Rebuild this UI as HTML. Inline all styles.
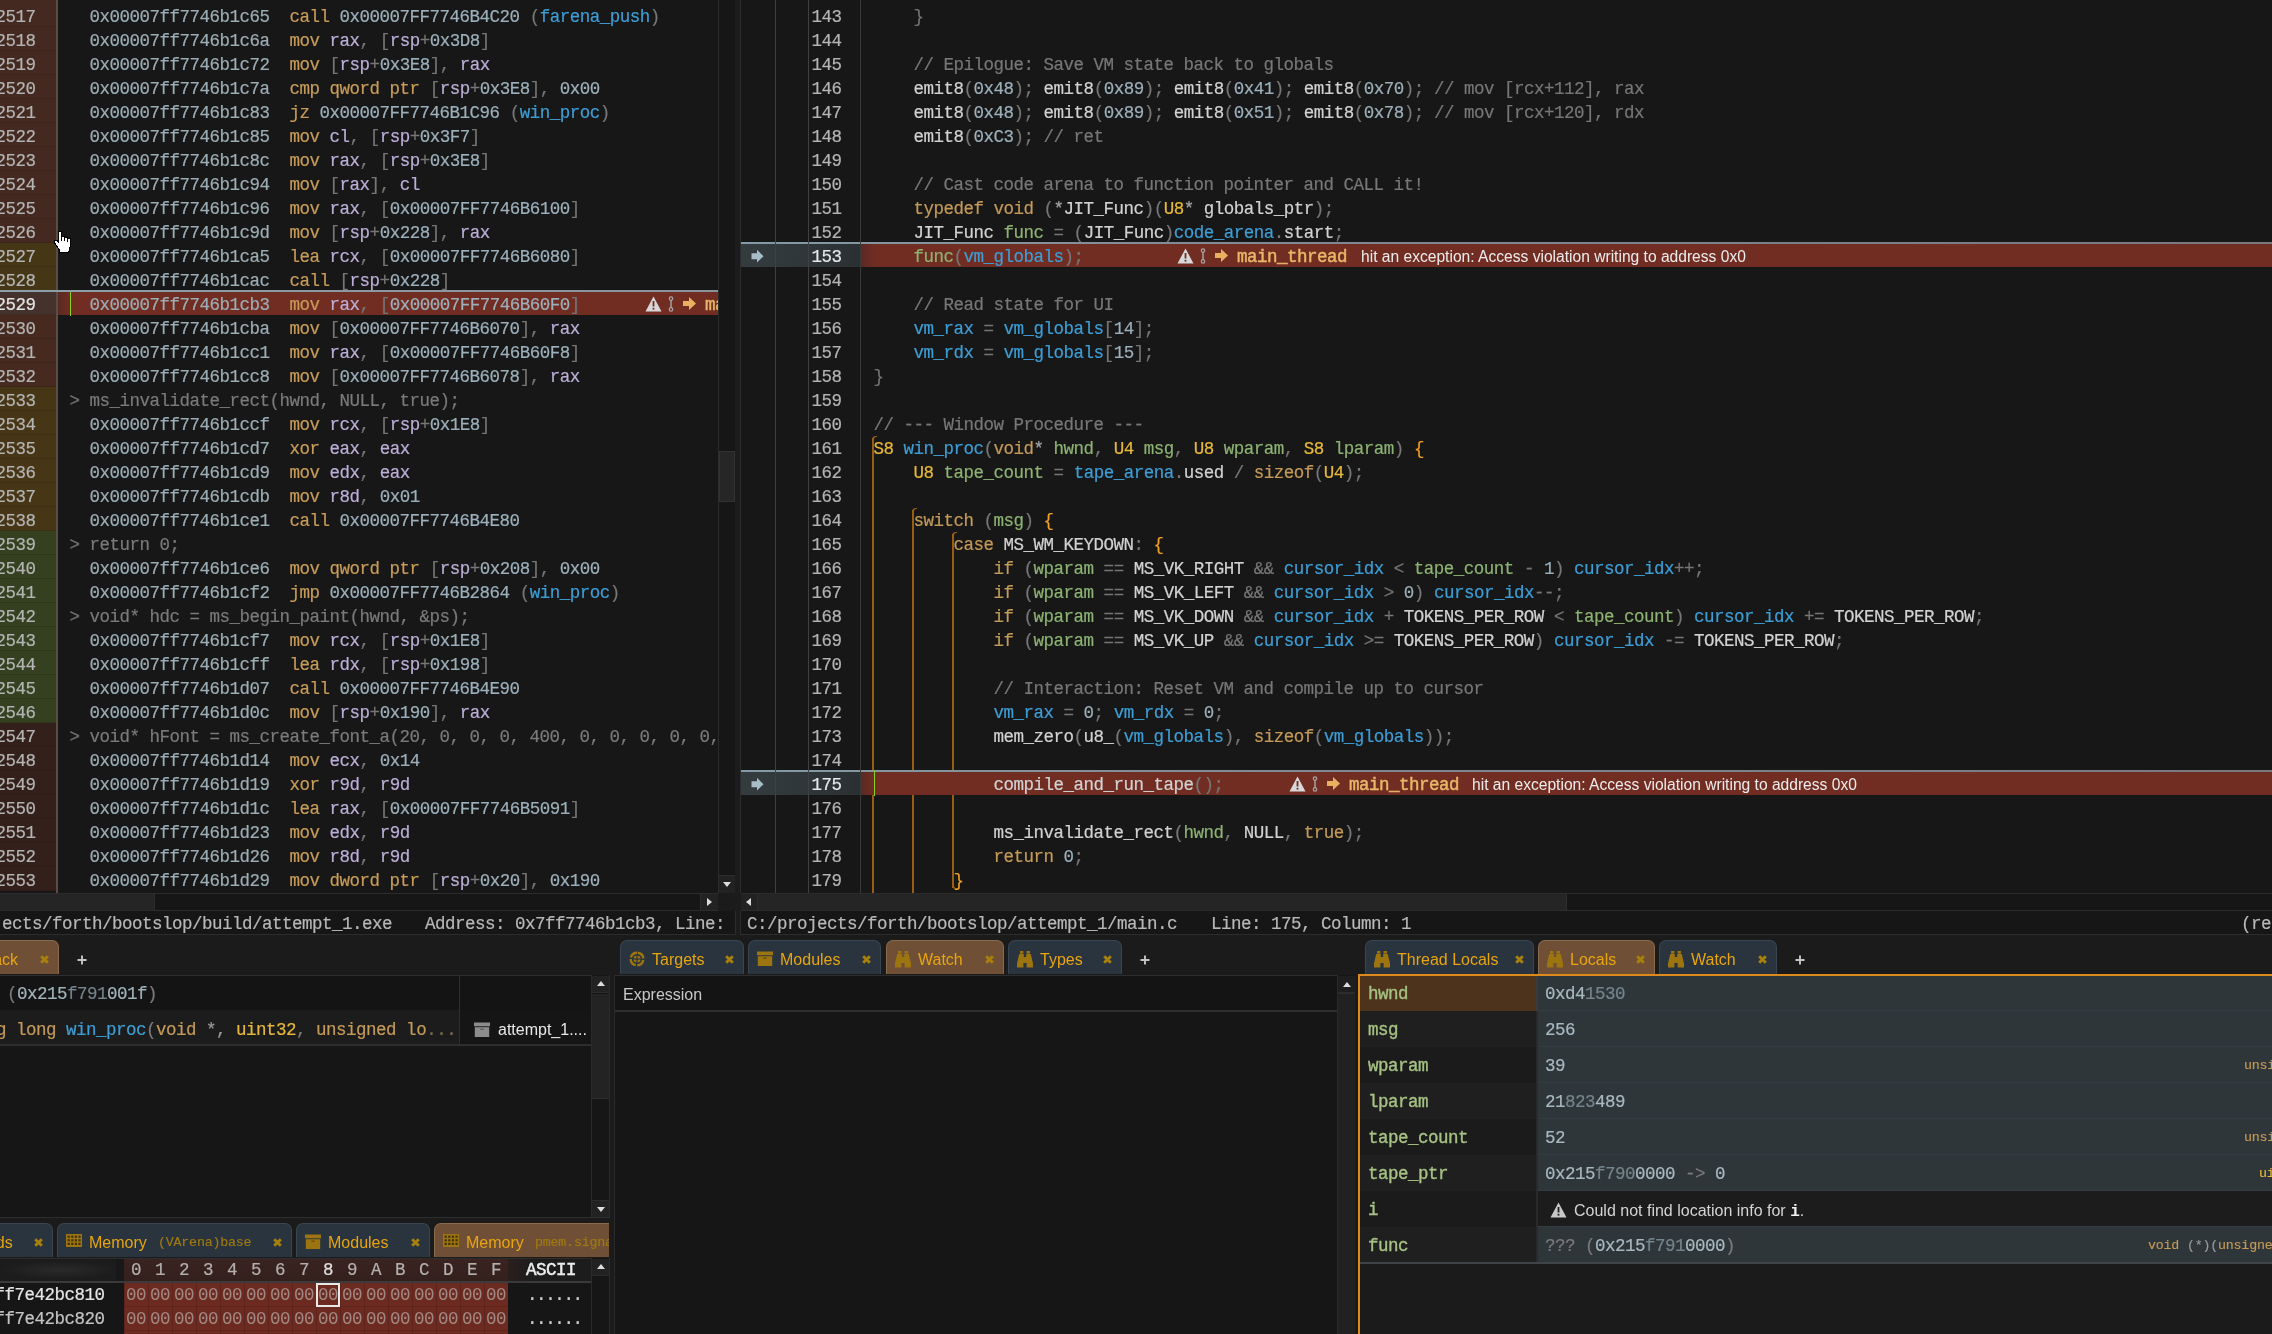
<!DOCTYPE html>
<html><head><meta charset="utf-8"><style>
html,body{margin:0;padding:0;}
#root{position:absolute;left:0;top:0;width:2272px;height:1334px;overflow:hidden;will-change:transform;}
.t{position:absolute;white-space:pre;height:24px;line-height:24px;}
.m{font-family:'Liberation Mono',monospace;font-size:17.5px;letter-spacing:-0.5px;-webkit-text-stroke:0.2px;}
.s{font-family:'Liberation Sans',sans-serif;font-size:16px;}
body{width:2272px;height:1334px;overflow:hidden;position:relative;background:#1b1b1b;}
</style></head><body><div id="root">
<div style="position:absolute;left:0px;top:0px;width:718px;height:893px;overflow:hidden;background:#171717">
<div style="position:absolute;left:0px;top:0px;width:56px;height:3px;background:#43291f;"></div>
<div style="position:absolute;left:56px;top:0px;width:2px;height:893px;background:#5a4c47;"></div>
<div style="position:absolute;left:0px;top:3px;width:56px;height:24px;background:#43291f;box-shadow:inset 0 -1px 0 rgba(0,0,0,0.12);"></div>
<div class="t m" style="left:-4.5px;top:4.5px;"><span style="color:#b4b4b4">2517</span></div>
<div class="t m" style="left:89.5px;top:4.5px;"><span style="color:#9cadb5">0x00007ff7746b1c65</span>  <span style="color:#c89c58">call</span> <span style="color:#9cb0bb">0x00007FF7746B4C20</span> <span style="color:#767676">(</span><span style="color:#3d9ed6">farena_push</span><span style="color:#767676">)</span></div>
<div style="position:absolute;left:0px;top:27px;width:56px;height:24px;background:#43291f;box-shadow:inset 0 -1px 0 rgba(0,0,0,0.12);"></div>
<div class="t m" style="left:-4.5px;top:28.5px;"><span style="color:#b4b4b4">2518</span></div>
<div class="t m" style="left:89.5px;top:28.5px;"><span style="color:#9cadb5">0x00007ff7746b1c6a</span>  <span style="color:#c89c58">mov</span> <span style="color:#bcaed8">rax</span><span style="color:#767676">,</span> <span style="color:#767676">[</span><span style="color:#bcaed8">rsp</span><span style="color:#767676">+</span><span style="color:#9cb0bb">0x3D8</span><span style="color:#767676">]</span></div>
<div style="position:absolute;left:0px;top:51px;width:56px;height:24px;background:#43291f;box-shadow:inset 0 -1px 0 rgba(0,0,0,0.12);"></div>
<div class="t m" style="left:-4.5px;top:52.5px;"><span style="color:#b4b4b4">2519</span></div>
<div class="t m" style="left:89.5px;top:52.5px;"><span style="color:#9cadb5">0x00007ff7746b1c72</span>  <span style="color:#c89c58">mov</span> <span style="color:#767676">[</span><span style="color:#bcaed8">rsp</span><span style="color:#767676">+</span><span style="color:#9cb0bb">0x3E8</span><span style="color:#767676">]</span><span style="color:#767676">,</span> <span style="color:#bcaed8">rax</span></div>
<div style="position:absolute;left:0px;top:75px;width:56px;height:24px;background:#43291f;box-shadow:inset 0 -1px 0 rgba(0,0,0,0.12);"></div>
<div class="t m" style="left:-4.5px;top:76.5px;"><span style="color:#b4b4b4">2520</span></div>
<div class="t m" style="left:89.5px;top:76.5px;"><span style="color:#9cadb5">0x00007ff7746b1c7a</span>  <span style="color:#c89c58">cmp</span> <span style="color:#c89c58">qword</span> <span style="color:#c89c58">ptr</span> <span style="color:#767676">[</span><span style="color:#bcaed8">rsp</span><span style="color:#767676">+</span><span style="color:#9cb0bb">0x3E8</span><span style="color:#767676">]</span><span style="color:#767676">,</span> <span style="color:#9cb0bb">0x00</span></div>
<div style="position:absolute;left:0px;top:99px;width:56px;height:24px;background:#43291f;box-shadow:inset 0 -1px 0 rgba(0,0,0,0.12);"></div>
<div class="t m" style="left:-4.5px;top:100.5px;"><span style="color:#b4b4b4">2521</span></div>
<div class="t m" style="left:89.5px;top:100.5px;"><span style="color:#9cadb5">0x00007ff7746b1c83</span>  <span style="color:#c89c58">jz</span> <span style="color:#9cb0bb">0x00007FF7746B1C96</span> <span style="color:#767676">(</span><span style="color:#3d9ed6">win_proc</span><span style="color:#767676">)</span></div>
<div style="position:absolute;left:0px;top:123px;width:56px;height:24px;background:#43291f;box-shadow:inset 0 -1px 0 rgba(0,0,0,0.12);"></div>
<div class="t m" style="left:-4.5px;top:124.5px;"><span style="color:#b4b4b4">2522</span></div>
<div class="t m" style="left:89.5px;top:124.5px;"><span style="color:#9cadb5">0x00007ff7746b1c85</span>  <span style="color:#c89c58">mov</span> <span style="color:#bcaed8">cl</span><span style="color:#767676">,</span> <span style="color:#767676">[</span><span style="color:#bcaed8">rsp</span><span style="color:#767676">+</span><span style="color:#9cb0bb">0x3F7</span><span style="color:#767676">]</span></div>
<div style="position:absolute;left:0px;top:147px;width:56px;height:24px;background:#43291f;box-shadow:inset 0 -1px 0 rgba(0,0,0,0.12);"></div>
<div class="t m" style="left:-4.5px;top:148.5px;"><span style="color:#b4b4b4">2523</span></div>
<div class="t m" style="left:89.5px;top:148.5px;"><span style="color:#9cadb5">0x00007ff7746b1c8c</span>  <span style="color:#c89c58">mov</span> <span style="color:#bcaed8">rax</span><span style="color:#767676">,</span> <span style="color:#767676">[</span><span style="color:#bcaed8">rsp</span><span style="color:#767676">+</span><span style="color:#9cb0bb">0x3E8</span><span style="color:#767676">]</span></div>
<div style="position:absolute;left:0px;top:171px;width:56px;height:24px;background:#43291f;box-shadow:inset 0 -1px 0 rgba(0,0,0,0.12);"></div>
<div class="t m" style="left:-4.5px;top:172.5px;"><span style="color:#b4b4b4">2524</span></div>
<div class="t m" style="left:89.5px;top:172.5px;"><span style="color:#9cadb5">0x00007ff7746b1c94</span>  <span style="color:#c89c58">mov</span> <span style="color:#767676">[</span><span style="color:#bcaed8">rax</span><span style="color:#767676">]</span><span style="color:#767676">,</span> <span style="color:#bcaed8">cl</span></div>
<div style="position:absolute;left:0px;top:195px;width:56px;height:24px;background:#43291f;box-shadow:inset 0 -1px 0 rgba(0,0,0,0.12);"></div>
<div class="t m" style="left:-4.5px;top:196.5px;"><span style="color:#b4b4b4">2525</span></div>
<div class="t m" style="left:89.5px;top:196.5px;"><span style="color:#9cadb5">0x00007ff7746b1c96</span>  <span style="color:#c89c58">mov</span> <span style="color:#bcaed8">rax</span><span style="color:#767676">,</span> <span style="color:#767676">[</span><span style="color:#9cb0bb">0x00007FF7746B6100</span><span style="color:#767676">]</span></div>
<div style="position:absolute;left:0px;top:219px;width:56px;height:24px;background:#43291f;box-shadow:inset 0 -1px 0 rgba(0,0,0,0.12);"></div>
<div class="t m" style="left:-4.5px;top:220.5px;"><span style="color:#b4b4b4">2526</span></div>
<div class="t m" style="left:89.5px;top:220.5px;"><span style="color:#9cadb5">0x00007ff7746b1c9d</span>  <span style="color:#c89c58">mov</span> <span style="color:#767676">[</span><span style="color:#bcaed8">rsp</span><span style="color:#767676">+</span><span style="color:#9cb0bb">0x228</span><span style="color:#767676">]</span><span style="color:#767676">,</span> <span style="color:#bcaed8">rax</span></div>
<div style="position:absolute;left:0px;top:243px;width:56px;height:24px;background:#453616;box-shadow:inset 0 -1px 0 rgba(0,0,0,0.12);"></div>
<div class="t m" style="left:-4.5px;top:244.5px;"><span style="color:#b4b4b4">2527</span></div>
<div class="t m" style="left:89.5px;top:244.5px;"><span style="color:#9cadb5">0x00007ff7746b1ca5</span>  <span style="color:#c89c58">lea</span> <span style="color:#bcaed8">rcx</span><span style="color:#767676">,</span> <span style="color:#767676">[</span><span style="color:#9cb0bb">0x00007FF7746B6080</span><span style="color:#767676">]</span></div>
<div style="position:absolute;left:0px;top:267px;width:56px;height:24px;background:#453616;box-shadow:inset 0 -1px 0 rgba(0,0,0,0.12);"></div>
<div class="t m" style="left:-4.5px;top:268.5px;"><span style="color:#b4b4b4">2528</span></div>
<div class="t m" style="left:89.5px;top:268.5px;"><span style="color:#9cadb5">0x00007ff7746b1cac</span>  <span style="color:#c89c58">call</span> <span style="color:#767676">[</span><span style="color:#bcaed8">rsp</span><span style="color:#767676">+</span><span style="color:#9cb0bb">0x228</span><span style="color:#767676">]</span></div>
<div style="position:absolute;left:0px;top:291px;width:56px;height:24px;background:#46322c;box-shadow:inset 0 -1px 0 rgba(0,0,0,0.12);"></div>
<div style="position:absolute;left:0px;top:290px;width:718px;height:2px;background:#8a9ca6;"></div>
<div style="position:absolute;left:58px;top:292px;width:660px;height:23px;background:#722d23;"></div>
<div style="position:absolute;left:58px;top:292px;width:14px;height:23px;background:linear-gradient(90deg,#5a2a22,#722d23);"></div>
<div style="position:absolute;left:70px;top:290px;width:1px;height:26px;background:#8ad020;"></div>
<div class="t m" style="left:-4.5px;top:292.5px;"><span style="color:#e6e6e6">2529</span></div>
<div class="t m" style="left:89.5px;top:292.5px;"><span style="color:#9cadb5">0x00007ff7746b1cb3</span>  <span style="color:#c89c58">mov</span> <span style="color:#bcaed8">rax</span><span style="color:#767676">,</span> <span style="color:#767676">[</span><span style="color:#9cb0bb">0x00007FF7746B60F0</span><span style="color:#767676">]</span></div>
<div style="position:absolute;left:0px;top:315px;width:56px;height:24px;background:#46291f;box-shadow:inset 0 -1px 0 rgba(0,0,0,0.12);"></div>
<div class="t m" style="left:-4.5px;top:316.5px;"><span style="color:#b4b4b4">2530</span></div>
<div class="t m" style="left:89.5px;top:316.5px;"><span style="color:#9cadb5">0x00007ff7746b1cba</span>  <span style="color:#c89c58">mov</span> <span style="color:#767676">[</span><span style="color:#9cb0bb">0x00007FF7746B6070</span><span style="color:#767676">]</span><span style="color:#767676">,</span> <span style="color:#bcaed8">rax</span></div>
<div style="position:absolute;left:0px;top:339px;width:56px;height:24px;background:#46291f;box-shadow:inset 0 -1px 0 rgba(0,0,0,0.12);"></div>
<div class="t m" style="left:-4.5px;top:340.5px;"><span style="color:#b4b4b4">2531</span></div>
<div class="t m" style="left:89.5px;top:340.5px;"><span style="color:#9cadb5">0x00007ff7746b1cc1</span>  <span style="color:#c89c58">mov</span> <span style="color:#bcaed8">rax</span><span style="color:#767676">,</span> <span style="color:#767676">[</span><span style="color:#9cb0bb">0x00007FF7746B60F8</span><span style="color:#767676">]</span></div>
<div style="position:absolute;left:0px;top:363px;width:56px;height:24px;background:#46291f;box-shadow:inset 0 -1px 0 rgba(0,0,0,0.12);"></div>
<div class="t m" style="left:-4.5px;top:364.5px;"><span style="color:#b4b4b4">2532</span></div>
<div class="t m" style="left:89.5px;top:364.5px;"><span style="color:#9cadb5">0x00007ff7746b1cc8</span>  <span style="color:#c89c58">mov</span> <span style="color:#767676">[</span><span style="color:#9cb0bb">0x00007FF7746B6078</span><span style="color:#767676">]</span><span style="color:#767676">,</span> <span style="color:#bcaed8">rax</span></div>
<div style="position:absolute;left:0px;top:387px;width:56px;height:24px;background:#463615;box-shadow:inset 0 -1px 0 rgba(0,0,0,0.12);"></div>
<div class="t m" style="left:-4.5px;top:388.5px;"><span style="color:#b4b4b4">2533</span></div>
<div class="t m" style="left:69.5px;top:388.5px;"><span style="color:#767676">&gt; </span><span style="color:#7a7a7a">ms_invalidate_rect(hwnd, NULL, true);</span></div>
<div style="position:absolute;left:0px;top:411px;width:56px;height:24px;background:#463615;box-shadow:inset 0 -1px 0 rgba(0,0,0,0.12);"></div>
<div class="t m" style="left:-4.5px;top:412.5px;"><span style="color:#b4b4b4">2534</span></div>
<div class="t m" style="left:89.5px;top:412.5px;"><span style="color:#9cadb5">0x00007ff7746b1ccf</span>  <span style="color:#c89c58">mov</span> <span style="color:#bcaed8">rcx</span><span style="color:#767676">,</span> <span style="color:#767676">[</span><span style="color:#bcaed8">rsp</span><span style="color:#767676">+</span><span style="color:#9cb0bb">0x1E8</span><span style="color:#767676">]</span></div>
<div style="position:absolute;left:0px;top:435px;width:56px;height:24px;background:#463615;box-shadow:inset 0 -1px 0 rgba(0,0,0,0.12);"></div>
<div class="t m" style="left:-4.5px;top:436.5px;"><span style="color:#b4b4b4">2535</span></div>
<div class="t m" style="left:89.5px;top:436.5px;"><span style="color:#9cadb5">0x00007ff7746b1cd7</span>  <span style="color:#c89c58">xor</span> <span style="color:#bcaed8">eax</span><span style="color:#767676">,</span> <span style="color:#bcaed8">eax</span></div>
<div style="position:absolute;left:0px;top:459px;width:56px;height:24px;background:#463615;box-shadow:inset 0 -1px 0 rgba(0,0,0,0.12);"></div>
<div class="t m" style="left:-4.5px;top:460.5px;"><span style="color:#b4b4b4">2536</span></div>
<div class="t m" style="left:89.5px;top:460.5px;"><span style="color:#9cadb5">0x00007ff7746b1cd9</span>  <span style="color:#c89c58">mov</span> <span style="color:#bcaed8">edx</span><span style="color:#767676">,</span> <span style="color:#bcaed8">eax</span></div>
<div style="position:absolute;left:0px;top:483px;width:56px;height:24px;background:#463615;box-shadow:inset 0 -1px 0 rgba(0,0,0,0.12);"></div>
<div class="t m" style="left:-4.5px;top:484.5px;"><span style="color:#b4b4b4">2537</span></div>
<div class="t m" style="left:89.5px;top:484.5px;"><span style="color:#9cadb5">0x00007ff7746b1cdb</span>  <span style="color:#c89c58">mov</span> <span style="color:#bcaed8">r8d</span><span style="color:#767676">,</span> <span style="color:#9cb0bb">0x01</span></div>
<div style="position:absolute;left:0px;top:507px;width:56px;height:24px;background:#463615;box-shadow:inset 0 -1px 0 rgba(0,0,0,0.12);"></div>
<div class="t m" style="left:-4.5px;top:508.5px;"><span style="color:#b4b4b4">2538</span></div>
<div class="t m" style="left:89.5px;top:508.5px;"><span style="color:#9cadb5">0x00007ff7746b1ce1</span>  <span style="color:#c89c58">call</span> <span style="color:#9cb0bb">0x00007FF7746B4E80</span></div>
<div style="position:absolute;left:0px;top:531px;width:56px;height:24px;background:#34401f;box-shadow:inset 0 -1px 0 rgba(0,0,0,0.12);"></div>
<div class="t m" style="left:-4.5px;top:532.5px;"><span style="color:#b4b4b4">2539</span></div>
<div class="t m" style="left:69.5px;top:532.5px;"><span style="color:#767676">&gt; </span><span style="color:#7a7a7a">return 0;</span></div>
<div style="position:absolute;left:0px;top:555px;width:56px;height:24px;background:#34401f;box-shadow:inset 0 -1px 0 rgba(0,0,0,0.12);"></div>
<div class="t m" style="left:-4.5px;top:556.5px;"><span style="color:#b4b4b4">2540</span></div>
<div class="t m" style="left:89.5px;top:556.5px;"><span style="color:#9cadb5">0x00007ff7746b1ce6</span>  <span style="color:#c89c58">mov</span> <span style="color:#c89c58">qword</span> <span style="color:#c89c58">ptr</span> <span style="color:#767676">[</span><span style="color:#bcaed8">rsp</span><span style="color:#767676">+</span><span style="color:#9cb0bb">0x208</span><span style="color:#767676">]</span><span style="color:#767676">,</span> <span style="color:#9cb0bb">0x00</span></div>
<div style="position:absolute;left:0px;top:579px;width:56px;height:24px;background:#34401f;box-shadow:inset 0 -1px 0 rgba(0,0,0,0.12);"></div>
<div class="t m" style="left:-4.5px;top:580.5px;"><span style="color:#b4b4b4">2541</span></div>
<div class="t m" style="left:89.5px;top:580.5px;"><span style="color:#9cadb5">0x00007ff7746b1cf2</span>  <span style="color:#c89c58">jmp</span> <span style="color:#9cb0bb">0x00007FF7746B2864</span> <span style="color:#767676">(</span><span style="color:#3d9ed6">win_proc</span><span style="color:#767676">)</span></div>
<div style="position:absolute;left:0px;top:603px;width:56px;height:24px;background:#34401f;box-shadow:inset 0 -1px 0 rgba(0,0,0,0.12);"></div>
<div class="t m" style="left:-4.5px;top:604.5px;"><span style="color:#b4b4b4">2542</span></div>
<div class="t m" style="left:69.5px;top:604.5px;"><span style="color:#767676">&gt; </span><span style="color:#7a7a7a">void* hdc = ms_begin_paint(hwnd, &amp;ps);</span></div>
<div style="position:absolute;left:0px;top:627px;width:56px;height:24px;background:#34401f;box-shadow:inset 0 -1px 0 rgba(0,0,0,0.12);"></div>
<div class="t m" style="left:-4.5px;top:628.5px;"><span style="color:#b4b4b4">2543</span></div>
<div class="t m" style="left:89.5px;top:628.5px;"><span style="color:#9cadb5">0x00007ff7746b1cf7</span>  <span style="color:#c89c58">mov</span> <span style="color:#bcaed8">rcx</span><span style="color:#767676">,</span> <span style="color:#767676">[</span><span style="color:#bcaed8">rsp</span><span style="color:#767676">+</span><span style="color:#9cb0bb">0x1E8</span><span style="color:#767676">]</span></div>
<div style="position:absolute;left:0px;top:651px;width:56px;height:24px;background:#34401f;box-shadow:inset 0 -1px 0 rgba(0,0,0,0.12);"></div>
<div class="t m" style="left:-4.5px;top:652.5px;"><span style="color:#b4b4b4">2544</span></div>
<div class="t m" style="left:89.5px;top:652.5px;"><span style="color:#9cadb5">0x00007ff7746b1cff</span>  <span style="color:#c89c58">lea</span> <span style="color:#bcaed8">rdx</span><span style="color:#767676">,</span> <span style="color:#767676">[</span><span style="color:#bcaed8">rsp</span><span style="color:#767676">+</span><span style="color:#9cb0bb">0x198</span><span style="color:#767676">]</span></div>
<div style="position:absolute;left:0px;top:675px;width:56px;height:24px;background:#34401f;box-shadow:inset 0 -1px 0 rgba(0,0,0,0.12);"></div>
<div class="t m" style="left:-4.5px;top:676.5px;"><span style="color:#b4b4b4">2545</span></div>
<div class="t m" style="left:89.5px;top:676.5px;"><span style="color:#9cadb5">0x00007ff7746b1d07</span>  <span style="color:#c89c58">call</span> <span style="color:#9cb0bb">0x00007FF7746B4E90</span></div>
<div style="position:absolute;left:0px;top:699px;width:56px;height:24px;background:#34401f;box-shadow:inset 0 -1px 0 rgba(0,0,0,0.12);"></div>
<div class="t m" style="left:-4.5px;top:700.5px;"><span style="color:#b4b4b4">2546</span></div>
<div class="t m" style="left:89.5px;top:700.5px;"><span style="color:#9cadb5">0x00007ff7746b1d0c</span>  <span style="color:#c89c58">mov</span> <span style="color:#767676">[</span><span style="color:#bcaed8">rsp</span><span style="color:#767676">+</span><span style="color:#9cb0bb">0x190</span><span style="color:#767676">]</span><span style="color:#767676">,</span> <span style="color:#bcaed8">rax</span></div>
<div style="position:absolute;left:0px;top:723px;width:56px;height:24px;background:#33201b;box-shadow:inset 0 -1px 0 rgba(0,0,0,0.12);"></div>
<div class="t m" style="left:-4.5px;top:724.5px;"><span style="color:#b4b4b4">2547</span></div>
<div class="t m" style="left:69.5px;top:724.5px;"><span style="color:#767676">&gt; </span><span style="color:#7a7a7a">void* hFont = ms_create_font_a(20, 0, 0, 0, 400, 0, 0, 0, 0, 0,</span></div>
<div style="position:absolute;left:0px;top:747px;width:56px;height:24px;background:#33201b;box-shadow:inset 0 -1px 0 rgba(0,0,0,0.12);"></div>
<div class="t m" style="left:-4.5px;top:748.5px;"><span style="color:#b4b4b4">2548</span></div>
<div class="t m" style="left:89.5px;top:748.5px;"><span style="color:#9cadb5">0x00007ff7746b1d14</span>  <span style="color:#c89c58">mov</span> <span style="color:#bcaed8">ecx</span><span style="color:#767676">,</span> <span style="color:#9cb0bb">0x14</span></div>
<div style="position:absolute;left:0px;top:771px;width:56px;height:24px;background:#33201b;box-shadow:inset 0 -1px 0 rgba(0,0,0,0.12);"></div>
<div class="t m" style="left:-4.5px;top:772.5px;"><span style="color:#b4b4b4">2549</span></div>
<div class="t m" style="left:89.5px;top:772.5px;"><span style="color:#9cadb5">0x00007ff7746b1d19</span>  <span style="color:#c89c58">xor</span> <span style="color:#bcaed8">r9d</span><span style="color:#767676">,</span> <span style="color:#bcaed8">r9d</span></div>
<div style="position:absolute;left:0px;top:795px;width:56px;height:24px;background:#33201b;box-shadow:inset 0 -1px 0 rgba(0,0,0,0.12);"></div>
<div class="t m" style="left:-4.5px;top:796.5px;"><span style="color:#b4b4b4">2550</span></div>
<div class="t m" style="left:89.5px;top:796.5px;"><span style="color:#9cadb5">0x00007ff7746b1d1c</span>  <span style="color:#c89c58">lea</span> <span style="color:#bcaed8">rax</span><span style="color:#767676">,</span> <span style="color:#767676">[</span><span style="color:#9cb0bb">0x00007FF7746B5091</span><span style="color:#767676">]</span></div>
<div style="position:absolute;left:0px;top:819px;width:56px;height:24px;background:#33201b;box-shadow:inset 0 -1px 0 rgba(0,0,0,0.12);"></div>
<div class="t m" style="left:-4.5px;top:820.5px;"><span style="color:#b4b4b4">2551</span></div>
<div class="t m" style="left:89.5px;top:820.5px;"><span style="color:#9cadb5">0x00007ff7746b1d23</span>  <span style="color:#c89c58">mov</span> <span style="color:#bcaed8">edx</span><span style="color:#767676">,</span> <span style="color:#bcaed8">r9d</span></div>
<div style="position:absolute;left:0px;top:843px;width:56px;height:24px;background:#33201b;box-shadow:inset 0 -1px 0 rgba(0,0,0,0.12);"></div>
<div class="t m" style="left:-4.5px;top:844.5px;"><span style="color:#b4b4b4">2552</span></div>
<div class="t m" style="left:89.5px;top:844.5px;"><span style="color:#9cadb5">0x00007ff7746b1d26</span>  <span style="color:#c89c58">mov</span> <span style="color:#bcaed8">r8d</span><span style="color:#767676">,</span> <span style="color:#bcaed8">r9d</span></div>
<div style="position:absolute;left:0px;top:867px;width:56px;height:24px;background:#33201b;box-shadow:inset 0 -1px 0 rgba(0,0,0,0.12);"></div>
<div class="t m" style="left:-4.5px;top:868.5px;"><span style="color:#b4b4b4">2553</span></div>
<div class="t m" style="left:89.5px;top:868.5px;"><span style="color:#9cadb5">0x00007ff7746b1d29</span>  <span style="color:#c89c58">mov</span> <span style="color:#c89c58">dword</span> <span style="color:#c89c58">ptr</span> <span style="color:#767676">[</span><span style="color:#bcaed8">rsp</span><span style="color:#767676">+</span><span style="color:#9cb0bb">0x20</span><span style="color:#767676">]</span><span style="color:#767676">,</span> <span style="color:#9cb0bb">0x190</span></div>
<svg style="position:absolute;left:645px;top:296px" width="17" height="16" viewBox="0 0 17 16"><path d="M8.5 0.5L16.5 15.5H0.5Z" fill="#d8d8d8"/><rect x="7.6" y="5" width="1.8" height="5.5" fill="#722d23"/><rect x="7.6" y="11.8" width="1.8" height="1.8" fill="#722d23"/></svg>
<svg style="position:absolute;left:668px;top:296px" width="6" height="16" viewBox="0 0 6 16"><circle cx="3" cy="2.6" r="1.7" fill="none" stroke="#a8a8a8" stroke-width="1.2"/><circle cx="3" cy="13.4" r="1.7" fill="none" stroke="#a8a8a8" stroke-width="1.2"/><path d="M3 4.3V11.7" stroke="#a8a8a8" stroke-width="1.4"/></svg>
<svg style="position:absolute;left:683px;top:297px" width="13" height="13" viewBox="0 0 13 13"><path d="M0 4h6V0l7 6.5-7 6.5V9H0z" fill="#e8b060"/></svg>
<div class="t m" style="left:705px;top:293px;-webkit-text-stroke:0.45px;"><span style="color:#e8b868">main_thread</span></div>
<div class="t s" style="left:9999px;top:293px;font-size:15.6px;"><span style="color:#ececec">hit an exception: Access violation writing to address 0x0</span></div>
<div style="position:absolute;left:0px;top:290px;width:718px;height:2px;background:linear-gradient(90deg,#8aa0aa,#8a929a);"></div>
</div>
<svg style="position:absolute;left:0;top:0" width="100" height="260" viewBox="0 0 100 260" shape-rendering="crispEdges"><path d="M58.5 232.5Q58.5 231.5 60 231.5Q61.5 231.5 61.5 232.5V236.5H64.5V237.5H67.5V238.5H69.5Q70.5 238.5 70.5 239.5V246.5L69.5 247.5V250.5L68.5 252.5H59.5V250.5L54.5 242.5V241.5Q54.5 240.5 56 240.5Q57.5 240.5 58.5 242.5Z" fill="#fff" stroke="#000" stroke-width="1.1"/><path d="M61.5 236.5V240.5M64.5 237.5V240.5M67.5 238.5V241.5" stroke="#000" stroke-width="1"/></svg>
<div style="position:absolute;left:741px;top:0px;width:1531px;height:893px;background:#171717;"></div>
<div style="position:absolute;left:872px;top:438px;width:2px;height:455px;background:#985f14;"></div>
<div style="position:absolute;left:872px;top:436px;width:5px;height:6px;border-left:2px solid #985f14;border-top:1.5px solid #985f14;border-top-left-radius:4px;box-sizing:border-box"></div>
<div style="position:absolute;left:912px;top:510px;width:2px;height:383px;background:#985f14;"></div>
<div style="position:absolute;left:912px;top:508px;width:5px;height:6px;border-left:2px solid #985f14;border-top:1.5px solid #985f14;border-top-left-radius:4px;box-sizing:border-box"></div>
<div style="position:absolute;left:952px;top:534px;width:2px;height:354px;background:#985f14;"></div>
<div style="position:absolute;left:952px;top:532px;width:5px;height:6px;border-left:2px solid #985f14;border-top:1.5px solid #985f14;border-top-left-radius:4px;box-sizing:border-box"></div>
<div style="position:absolute;left:952px;top:883px;width:5px;height:6px;border-left:2px solid #985f14;border-bottom:1.5px solid #985f14;border-bottom-left-radius:4px;box-sizing:border-box"></div>
<div class="t m" style="left:811.5px;top:4.5px;"><span style="color:#b4b4b4">143</span></div>
<div class="t m" style="left:873.5px;top:4.5px;">    <span style="color:#767676">}</span></div>
<div class="t m" style="left:811.5px;top:28.5px;"><span style="color:#b4b4b4">144</span></div>
<div class="t m" style="left:811.5px;top:52.5px;"><span style="color:#b4b4b4">145</span></div>
<div class="t m" style="left:873.5px;top:52.5px;">    <span style="color:#777777">// Epilogue: Save VM state back to globals</span></div>
<div class="t m" style="left:811.5px;top:76.5px;"><span style="color:#b4b4b4">146</span></div>
<div class="t m" style="left:873.5px;top:76.5px;">    <span style="color:#d2d2d2">emit8</span><span style="color:#767676">(</span><span style="color:#9cb0bb">0x48</span><span style="color:#767676">)</span><span style="color:#767676">;</span> <span style="color:#d2d2d2">emit8</span><span style="color:#767676">(</span><span style="color:#9cb0bb">0x89</span><span style="color:#767676">)</span><span style="color:#767676">;</span> <span style="color:#d2d2d2">emit8</span><span style="color:#767676">(</span><span style="color:#9cb0bb">0x41</span><span style="color:#767676">)</span><span style="color:#767676">;</span> <span style="color:#d2d2d2">emit8</span><span style="color:#767676">(</span><span style="color:#9cb0bb">0x70</span><span style="color:#767676">)</span><span style="color:#767676">;</span> <span style="color:#777777">// mov [rcx+112], rax</span></div>
<div class="t m" style="left:811.5px;top:100.5px;"><span style="color:#b4b4b4">147</span></div>
<div class="t m" style="left:873.5px;top:100.5px;">    <span style="color:#d2d2d2">emit8</span><span style="color:#767676">(</span><span style="color:#9cb0bb">0x48</span><span style="color:#767676">)</span><span style="color:#767676">;</span> <span style="color:#d2d2d2">emit8</span><span style="color:#767676">(</span><span style="color:#9cb0bb">0x89</span><span style="color:#767676">)</span><span style="color:#767676">;</span> <span style="color:#d2d2d2">emit8</span><span style="color:#767676">(</span><span style="color:#9cb0bb">0x51</span><span style="color:#767676">)</span><span style="color:#767676">;</span> <span style="color:#d2d2d2">emit8</span><span style="color:#767676">(</span><span style="color:#9cb0bb">0x78</span><span style="color:#767676">)</span><span style="color:#767676">;</span> <span style="color:#777777">// mov [rcx+120], rdx</span></div>
<div class="t m" style="left:811.5px;top:124.5px;"><span style="color:#b4b4b4">148</span></div>
<div class="t m" style="left:873.5px;top:124.5px;">    <span style="color:#d2d2d2">emit8</span><span style="color:#767676">(</span><span style="color:#9cb0bb">0xC3</span><span style="color:#767676">)</span><span style="color:#767676">;</span> <span style="color:#777777">// ret</span></div>
<div class="t m" style="left:811.5px;top:148.5px;"><span style="color:#b4b4b4">149</span></div>
<div class="t m" style="left:811.5px;top:172.5px;"><span style="color:#b4b4b4">150</span></div>
<div class="t m" style="left:873.5px;top:172.5px;">    <span style="color:#777777">// Cast code arena to function pointer and CALL it!</span></div>
<div class="t m" style="left:811.5px;top:196.5px;"><span style="color:#b4b4b4">151</span></div>
<div class="t m" style="left:873.5px;top:196.5px;">    <span style="color:#c49a58">typedef</span> <span style="color:#c49a58">void</span> <span style="color:#767676">(</span><span style="color:#a8a8a8">*</span><span style="color:#d2d2d2">JIT_Func</span><span style="color:#767676">)</span><span style="color:#767676">(</span><span style="color:#e8b838">U8</span><span style="color:#a8a8a8">*</span> <span style="color:#d2d2d2">globals_ptr</span><span style="color:#767676">)</span><span style="color:#767676">;</span></div>
<div class="t m" style="left:811.5px;top:220.5px;"><span style="color:#b4b4b4">152</span></div>
<div class="t m" style="left:873.5px;top:220.5px;">    <span style="color:#d2d2d2">JIT_Func</span> <span style="color:#8db272">func</span> <span style="color:#767676">=</span> <span style="color:#767676">(</span><span style="color:#d2d2d2">JIT_Func</span><span style="color:#767676">)</span><span style="color:#3d9ed6">code_arena</span><span style="color:#767676">.</span><span style="color:#d2d2d2">start</span><span style="color:#767676">;</span></div>
<div style="position:absolute;left:741px;top:242px;width:1531px;height:2px;background:linear-gradient(90deg,#849aa4,#80888f 40%,#78797f);"></div>
<div style="position:absolute;left:741px;top:244px;width:120px;height:23px;background:linear-gradient(90deg,#353c40,#2f3639 60%,#2a2f32);"></div>
<div style="position:absolute;left:861px;top:244px;width:1411px;height:23px;background:#722d23;"></div>
<div style="position:absolute;left:861px;top:244px;width:14px;height:23px;background:linear-gradient(90deg,#5a2922,#722d23);"></div>
<svg style="position:absolute;left:750px;top:249px" width="14" height="14" viewBox="0 0 14 14"><path d="M1.5 4.2h5.5V0.8l6.5 6.4-6.5 6.4V10.3H1.5z" fill="#a6bcc6"/></svg>
<div class="t m" style="left:811.5px;top:244.5px;"><span style="color:#e8e8e8">153</span></div>
<div class="t m" style="left:873.5px;top:244.5px;">    <span style="color:#8db272">func</span><span style="color:#767676">(</span><span style="color:#3d9ed6">vm_globals</span><span style="color:#767676">)</span><span style="color:#767676">;</span></div>
<div class="t m" style="left:811.5px;top:268.5px;"><span style="color:#b4b4b4">154</span></div>
<div class="t m" style="left:811.5px;top:292.5px;"><span style="color:#b4b4b4">155</span></div>
<div class="t m" style="left:873.5px;top:292.5px;">    <span style="color:#777777">// Read state for UI</span></div>
<div class="t m" style="left:811.5px;top:316.5px;"><span style="color:#b4b4b4">156</span></div>
<div class="t m" style="left:873.5px;top:316.5px;">    <span style="color:#3d9ed6">vm_rax</span> <span style="color:#767676">=</span> <span style="color:#3d9ed6">vm_globals</span><span style="color:#767676">[</span><span style="color:#9cb0bb">14</span><span style="color:#767676">]</span><span style="color:#767676">;</span></div>
<div class="t m" style="left:811.5px;top:340.5px;"><span style="color:#b4b4b4">157</span></div>
<div class="t m" style="left:873.5px;top:340.5px;">    <span style="color:#3d9ed6">vm_rdx</span> <span style="color:#767676">=</span> <span style="color:#3d9ed6">vm_globals</span><span style="color:#767676">[</span><span style="color:#9cb0bb">15</span><span style="color:#767676">]</span><span style="color:#767676">;</span></div>
<div class="t m" style="left:811.5px;top:364.5px;"><span style="color:#b4b4b4">158</span></div>
<div class="t m" style="left:873.5px;top:364.5px;"><span style="color:#767676">}</span></div>
<div class="t m" style="left:811.5px;top:388.5px;"><span style="color:#b4b4b4">159</span></div>
<div class="t m" style="left:811.5px;top:412.5px;"><span style="color:#b4b4b4">160</span></div>
<div class="t m" style="left:873.5px;top:412.5px;"><span style="color:#777777">// --- Window Procedure ---</span></div>
<div class="t m" style="left:811.5px;top:436.5px;"><span style="color:#b4b4b4">161</span></div>
<div class="t m" style="left:873.5px;top:436.5px;"><span style="color:#e8b838">S8</span> <span style="color:#3d9ed6">win_proc</span><span style="color:#767676">(</span><span style="color:#c49a58">void</span><span style="color:#a8a8a8">*</span> <span style="color:#8db272">hwnd</span><span style="color:#767676">,</span> <span style="color:#e8b838">U4</span> <span style="color:#8db272">msg</span><span style="color:#767676">,</span> <span style="color:#e8b838">U8</span> <span style="color:#8db272">wparam</span><span style="color:#767676">,</span> <span style="color:#e8b838">S8</span> <span style="color:#8db272">lparam</span><span style="color:#767676">)</span> <span style="color:#f0a020">{</span></div>
<div class="t m" style="left:811.5px;top:460.5px;"><span style="color:#b4b4b4">162</span></div>
<div class="t m" style="left:873.5px;top:460.5px;">    <span style="color:#e8b838">U8</span> <span style="color:#8db272">tape_count</span> <span style="color:#767676">=</span> <span style="color:#3d9ed6">tape_arena</span><span style="color:#767676">.</span><span style="color:#d2d2d2">used</span> <span style="color:#767676">/</span> <span style="color:#c49a58">sizeof</span><span style="color:#767676">(</span><span style="color:#e8b838">U4</span><span style="color:#767676">)</span><span style="color:#767676">;</span></div>
<div class="t m" style="left:811.5px;top:484.5px;"><span style="color:#b4b4b4">163</span></div>
<div class="t m" style="left:811.5px;top:508.5px;"><span style="color:#b4b4b4">164</span></div>
<div class="t m" style="left:873.5px;top:508.5px;">    <span style="color:#c49a58">switch</span> <span style="color:#767676">(</span><span style="color:#8db272">msg</span><span style="color:#767676">)</span> <span style="color:#f0a020">{</span></div>
<div class="t m" style="left:811.5px;top:532.5px;"><span style="color:#b4b4b4">165</span></div>
<div class="t m" style="left:873.5px;top:532.5px;">        <span style="color:#c49a58">case</span> <span style="color:#d2d2d2">MS_WM_KEYDOWN</span><span style="color:#767676">:</span> <span style="color:#f0a020">{</span></div>
<div class="t m" style="left:811.5px;top:556.5px;"><span style="color:#b4b4b4">166</span></div>
<div class="t m" style="left:873.5px;top:556.5px;">            <span style="color:#c49a58">if</span> <span style="color:#767676">(</span><span style="color:#8db272">wparam</span> <span style="color:#767676">=</span><span style="color:#767676">=</span> <span style="color:#d2d2d2">MS_VK_RIGHT</span> <span style="color:#767676">&amp;</span><span style="color:#767676">&amp;</span> <span style="color:#3d9ed6">cursor_idx</span> <span style="color:#767676">&lt;</span> <span style="color:#8db272">tape_count</span> <span style="color:#767676">-</span> <span style="color:#9cb0bb">1</span><span style="color:#767676">)</span> <span style="color:#3d9ed6">cursor_idx</span><span style="color:#767676">+</span><span style="color:#767676">+</span><span style="color:#767676">;</span></div>
<div class="t m" style="left:811.5px;top:580.5px;"><span style="color:#b4b4b4">167</span></div>
<div class="t m" style="left:873.5px;top:580.5px;">            <span style="color:#c49a58">if</span> <span style="color:#767676">(</span><span style="color:#8db272">wparam</span> <span style="color:#767676">=</span><span style="color:#767676">=</span> <span style="color:#d2d2d2">MS_VK_LEFT</span> <span style="color:#767676">&amp;</span><span style="color:#767676">&amp;</span> <span style="color:#3d9ed6">cursor_idx</span> <span style="color:#767676">&gt;</span> <span style="color:#9cb0bb">0</span><span style="color:#767676">)</span> <span style="color:#3d9ed6">cursor_idx</span><span style="color:#767676">-</span><span style="color:#767676">-</span><span style="color:#767676">;</span></div>
<div class="t m" style="left:811.5px;top:604.5px;"><span style="color:#b4b4b4">168</span></div>
<div class="t m" style="left:873.5px;top:604.5px;">            <span style="color:#c49a58">if</span> <span style="color:#767676">(</span><span style="color:#8db272">wparam</span> <span style="color:#767676">=</span><span style="color:#767676">=</span> <span style="color:#d2d2d2">MS_VK_DOWN</span> <span style="color:#767676">&amp;</span><span style="color:#767676">&amp;</span> <span style="color:#3d9ed6">cursor_idx</span> <span style="color:#767676">+</span> <span style="color:#d2d2d2">TOKENS_PER_ROW</span> <span style="color:#767676">&lt;</span> <span style="color:#8db272">tape_count</span><span style="color:#767676">)</span> <span style="color:#3d9ed6">cursor_idx</span> <span style="color:#767676">+</span><span style="color:#767676">=</span> <span style="color:#d2d2d2">TOKENS_PER_ROW</span><span style="color:#767676">;</span></div>
<div class="t m" style="left:811.5px;top:628.5px;"><span style="color:#b4b4b4">169</span></div>
<div class="t m" style="left:873.5px;top:628.5px;">            <span style="color:#c49a58">if</span> <span style="color:#767676">(</span><span style="color:#8db272">wparam</span> <span style="color:#767676">=</span><span style="color:#767676">=</span> <span style="color:#d2d2d2">MS_VK_UP</span> <span style="color:#767676">&amp;</span><span style="color:#767676">&amp;</span> <span style="color:#3d9ed6">cursor_idx</span> <span style="color:#767676">&gt;</span><span style="color:#767676">=</span> <span style="color:#d2d2d2">TOKENS_PER_ROW</span><span style="color:#767676">)</span> <span style="color:#3d9ed6">cursor_idx</span> <span style="color:#767676">-</span><span style="color:#767676">=</span> <span style="color:#d2d2d2">TOKENS_PER_ROW</span><span style="color:#767676">;</span></div>
<div class="t m" style="left:811.5px;top:652.5px;"><span style="color:#b4b4b4">170</span></div>
<div class="t m" style="left:811.5px;top:676.5px;"><span style="color:#b4b4b4">171</span></div>
<div class="t m" style="left:873.5px;top:676.5px;">            <span style="color:#777777">// Interaction: Reset VM and compile up to cursor</span></div>
<div class="t m" style="left:811.5px;top:700.5px;"><span style="color:#b4b4b4">172</span></div>
<div class="t m" style="left:873.5px;top:700.5px;">            <span style="color:#3d9ed6">vm_rax</span> <span style="color:#767676">=</span> <span style="color:#9cb0bb">0</span><span style="color:#767676">;</span> <span style="color:#3d9ed6">vm_rdx</span> <span style="color:#767676">=</span> <span style="color:#9cb0bb">0</span><span style="color:#767676">;</span></div>
<div class="t m" style="left:811.5px;top:724.5px;"><span style="color:#b4b4b4">173</span></div>
<div class="t m" style="left:873.5px;top:724.5px;">            <span style="color:#d2d2d2">mem_zero</span><span style="color:#767676">(</span><span style="color:#d2d2d2">u8_</span><span style="color:#767676">(</span><span style="color:#3d9ed6">vm_globals</span><span style="color:#767676">)</span><span style="color:#767676">,</span> <span style="color:#c49a58">sizeof</span><span style="color:#767676">(</span><span style="color:#3d9ed6">vm_globals</span><span style="color:#767676">)</span><span style="color:#767676">)</span><span style="color:#767676">;</span></div>
<div class="t m" style="left:811.5px;top:748.5px;"><span style="color:#b4b4b4">174</span></div>
<div style="position:absolute;left:741px;top:770px;width:1531px;height:2px;background:linear-gradient(90deg,#849aa4,#80888f 40%,#78797f);"></div>
<div style="position:absolute;left:741px;top:772px;width:120px;height:23px;background:linear-gradient(90deg,#353c40,#2f3639 60%,#2a2f32);"></div>
<div style="position:absolute;left:861px;top:772px;width:1411px;height:23px;background:#722d23;"></div>
<div style="position:absolute;left:861px;top:772px;width:14px;height:23px;background:linear-gradient(90deg,#5a2922,#722d23);"></div>
<div style="position:absolute;left:874px;top:770px;width:1px;height:26px;background:#8ad020;"></div>
<svg style="position:absolute;left:750px;top:777px" width="14" height="14" viewBox="0 0 14 14"><path d="M1.5 4.2h5.5V0.8l6.5 6.4-6.5 6.4V10.3H1.5z" fill="#a6bcc6"/></svg>
<div class="t m" style="left:811.5px;top:772.5px;"><span style="color:#e8e8e8">175</span></div>
<div class="t m" style="left:873.5px;top:772.5px;">            <span style="color:#d2d2d2">compile_and_run_tape</span><span style="color:#767676">(</span><span style="color:#767676">)</span><span style="color:#767676">;</span></div>
<div class="t m" style="left:811.5px;top:796.5px;"><span style="color:#b4b4b4">176</span></div>
<div class="t m" style="left:811.5px;top:820.5px;"><span style="color:#b4b4b4">177</span></div>
<div class="t m" style="left:873.5px;top:820.5px;">            <span style="color:#d2d2d2">ms_invalidate_rect</span><span style="color:#767676">(</span><span style="color:#8db272">hwnd</span><span style="color:#767676">,</span> <span style="color:#d2d2d2">NULL</span><span style="color:#767676">,</span> <span style="color:#c49a58">true</span><span style="color:#767676">)</span><span style="color:#767676">;</span></div>
<div class="t m" style="left:811.5px;top:844.5px;"><span style="color:#b4b4b4">178</span></div>
<div class="t m" style="left:873.5px;top:844.5px;">            <span style="color:#c49a58">return</span> <span style="color:#9cb0bb">0</span><span style="color:#767676">;</span></div>
<div class="t m" style="left:811.5px;top:868.5px;"><span style="color:#b4b4b4">179</span></div>
<div class="t m" style="left:873.5px;top:868.5px;">        <span style="color:#f0a020">}</span></div>
<div style="position:absolute;left:775px;top:0px;width:1px;height:893px;background:#404040;"></div>
<div style="position:absolute;left:808px;top:0px;width:1px;height:893px;background:#404040;"></div>
<div style="position:absolute;left:860px;top:0px;width:1px;height:893px;background:#3a3a3a;"></div>
<div style="position:absolute;left:740px;top:0px;width:1px;height:893px;background:#2c2c2c;"></div>
<svg style="position:absolute;left:1177px;top:248px" width="17" height="16" viewBox="0 0 17 16"><path d="M8.5 0.5L16.5 15.5H0.5Z" fill="#d8d8d8"/><rect x="7.6" y="5" width="1.8" height="5.5" fill="#722d23"/><rect x="7.6" y="11.8" width="1.8" height="1.8" fill="#722d23"/></svg>
<svg style="position:absolute;left:1200px;top:248px" width="6" height="16" viewBox="0 0 6 16"><circle cx="3" cy="2.6" r="1.7" fill="none" stroke="#a8a8a8" stroke-width="1.2"/><circle cx="3" cy="13.4" r="1.7" fill="none" stroke="#a8a8a8" stroke-width="1.2"/><path d="M3 4.3V11.7" stroke="#a8a8a8" stroke-width="1.4"/></svg>
<svg style="position:absolute;left:1215px;top:249px" width="13" height="13" viewBox="0 0 13 13"><path d="M0 4h6V0l7 6.5-7 6.5V9H0z" fill="#e8b060"/></svg>
<div class="t m" style="left:1237px;top:245px;-webkit-text-stroke:0.45px;"><span style="color:#e8b868">main_thread</span></div>
<div class="t s" style="left:1361px;top:245px;font-size:15.6px;"><span style="color:#ececec">hit an exception: Access violation writing to address 0x0</span></div>
<svg style="position:absolute;left:1289px;top:776px" width="17" height="16" viewBox="0 0 17 16"><path d="M8.5 0.5L16.5 15.5H0.5Z" fill="#d8d8d8"/><rect x="7.6" y="5" width="1.8" height="5.5" fill="#722d23"/><rect x="7.6" y="11.8" width="1.8" height="1.8" fill="#722d23"/></svg>
<svg style="position:absolute;left:1312px;top:776px" width="6" height="16" viewBox="0 0 6 16"><circle cx="3" cy="2.6" r="1.7" fill="none" stroke="#a8a8a8" stroke-width="1.2"/><circle cx="3" cy="13.4" r="1.7" fill="none" stroke="#a8a8a8" stroke-width="1.2"/><path d="M3 4.3V11.7" stroke="#a8a8a8" stroke-width="1.4"/></svg>
<svg style="position:absolute;left:1327px;top:777px" width="13" height="13" viewBox="0 0 13 13"><path d="M0 4h6V0l7 6.5-7 6.5V9H0z" fill="#e8b060"/></svg>
<div class="t m" style="left:1349px;top:773px;-webkit-text-stroke:0.45px;"><span style="color:#e8b868">main_thread</span></div>
<div class="t s" style="left:1472px;top:773px;font-size:15.6px;"><span style="color:#ececec">hit an exception: Access violation writing to address 0x0</span></div>
<div style="position:absolute;left:718px;top:0px;width:18px;height:893px;background:#161616;border-left:1px solid #2c2c2c;border-right:1px solid #2c2c2c;box-sizing:border-box;"></div>
<div style="position:absolute;left:719px;top:451px;width:16px;height:51px;background:#262626;border:1px solid #323232;box-sizing:border-box;"></div>
<div style="position:absolute;left:719px;top:875px;width:16px;height:18px;background:#222;border-top:1px solid #2c2c2c;box-sizing:border-box;"></div>
<svg style="position:absolute;left:722px;top:880px" width="10" height="8"><path d="M1 2h8L5 7z" fill="#ddd"/></svg>
<div style="position:absolute;left:0px;top:893px;width:718px;height:18px;background:#161616;border-top:1px solid #2c2c2c;border-bottom:1px solid #2c2c2c;box-sizing:border-box;"></div>
<div style="position:absolute;left:0px;top:894px;width:155px;height:16px;background:#252525;border-right:1px solid #2c2c2c;box-sizing:border-box;"></div>
<div style="position:absolute;left:700px;top:894px;width:18px;height:16px;background:#222;border-left:1px solid #2c2c2c;box-sizing:border-box;"></div>
<svg style="position:absolute;left:705px;top:897px" width="8" height="10"><path d="M2 1v8l5-4z" fill="#ddd"/></svg>
<div style="position:absolute;left:735px;top:0px;width:5px;height:935px;background:#1c1c1c;"></div>
<div style="position:absolute;left:741px;top:893px;width:1531px;height:18px;background:#161616;border-top:1px solid #2c2c2c;border-bottom:1px solid #2c2c2c;box-sizing:border-box;"></div>
<div style="position:absolute;left:741px;top:894px;width:17px;height:16px;background:#222;border-right:1px solid #2c2c2c;box-sizing:border-box;"></div>
<div style="position:absolute;left:758px;top:894px;width:809px;height:16px;background:#252525;border-right:1px solid #2f2f2f;box-sizing:border-box;"></div>
<svg style="position:absolute;left:745px;top:897px" width="8" height="10"><path d="M6 1v8L1 5z" fill="#ddd"/></svg>
<div style="position:absolute;left:0px;top:911px;width:736px;height:24px;background:#161616;border-bottom:1px solid #2c2c2c;border-right:1px solid #2c2c2c;box-sizing:border-box;"></div>
<div class="t m" style="left:2px;top:912px;"><span style="color:#b8b8b8">ects/forth/bootslop/build/attempt_1.exe</span></div>
<div class="t m" style="left:425px;top:912px;"><span style="color:#b8b8b8">Address: 0x7ff7746b1cb3, Line:</span></div>
<div style="position:absolute;left:740px;top:911px;width:1532px;height:24px;background:#161616;border-bottom:1px solid #2c2c2c;border-left:1px solid #2c2c2c;box-sizing:border-box;"></div>
<div class="t m" style="left:747px;top:912px;"><span style="color:#b8b8b8">C:/projects/forth/bootslop/attempt_1/main.c</span></div>
<div class="t m" style="left:1211px;top:912px;"><span style="color:#b8b8b8">Line: 175, Column: 1</span></div>
<div class="t m" style="left:2241px;top:912px;"><span style="color:#b8b8b8">(rea</span></div>
<div style="position:absolute;left:0px;top:935px;width:2272px;height:40px;background:#1b1b1b;"></div>
<div style="position:absolute;left:0px;top:935px;width:614px;height:399px;overflow:hidden;">
<div style="position:absolute;left:-86px;top:5px;width:145px;height:34px;background:#6f5036;border:1px solid #8a6a4c;border-bottom:none;border-radius:7px 7px 0 0;box-sizing:border-box;"></div>
<svg style="position:absolute;left:-77px;top:16px" width="16" height="17" viewBox="0 0 16 17"><rect x="3" y="0" width="3.4" height="2.6" fill="#9c7410"/><rect x="9.6" y="0" width="3.4" height="2.6" fill="#9c7410"/><path d="M2.2 3h4.6v3h2.4V3h4.6l2.2 9.5V16.5H9.6V12H6.4v4.5H0V12.5z" fill="#9c7410"/></svg>
<div class="t s" style="left:-54px;top:13px;"><span style="color:#e8a510">Call Stack</span></div>
<svg style="position:absolute;left:40px;top:20px" width="9" height="9" viewBox="0 0 9 9"><path d="M1.2 1.2L7.8 7.8M7.8 1.2L1.2 7.8" stroke="#a8800c" stroke-width="2.9" stroke-linecap="butt"/></svg>
<svg style="position:absolute;left:77px;top:20px" width="10" height="10" viewBox="0 0 10 10"><path d="M5 0.5v9M0.5 5h9" stroke="#c4c4c4" stroke-width="1.9"/></svg>
</div>
<div style="position:absolute;left:0px;top:975px;width:610px;height:243px;overflow:hidden;background:#161616;">
<div style="position:absolute;left:0px;top:0px;width:610px;height:1px;background:#2e2e2e;"></div>
<div style="position:absolute;left:0px;top:1px;width:591px;height:34px;background:#141414;"></div>
<div style="position:absolute;left:0px;top:35px;width:459px;height:34px;background:#1c1c1c;"></div>
<div style="position:absolute;left:459px;top:35px;width:132px;height:34px;background:#151515;"></div>
<div style="position:absolute;left:459px;top:1px;width:1px;height:69px;background:#2e2e2e;"></div>
<div style="position:absolute;left:0px;top:69px;width:591px;height:2px;background:#2e2e2e;"></div>
<div class="t m" style="left:7px;top:7px;"><span style="color:#7a7a7a">(</span><span style="color:#a3b4bc">0x215</span><span style="color:#74848c">f791</span><span style="color:#a3b4bc">001f</span><span style="color:#7a7a7a">)</span></div>
<div class="t m" style="left:-4px;top:43px;"><span style="color:#c49a58">g long </span><span style="color:#3d9ed6">win_proc</span><span style="color:#7a7a7a">(</span><span style="color:#c49a58">void</span><span style="color:#9a9a9a"> *, </span><span style="color:#e8b838">uint32</span><span style="color:#7a7a7a">, </span><span style="color:#c49a58">unsigned lo</span><span style="color:#7a6a50">...</span></div>
<svg style="position:absolute;left:474px;top:47px" width="16" height="16" viewBox="0 0 16 16"><rect x="0" y="0.5" width="16" height="3.8" fill="#8c8c8c"/><rect x="0.8" y="5.2" width="14.4" height="9.8" fill="#8c8c8c"/><rect x="6.2" y="6.6" width="3.6" height="1.1" fill="#00000060"/></svg>
<div class="t s" style="left:498px;top:43px;"><span style="color:#e8e8e8">attempt_1....</span></div>
<div style="position:absolute;left:591px;top:0px;width:19px;height:243px;background:#161616;border-left:1px solid #2a2a2a;border-right:1px solid #2a2a2a;box-sizing:border-box;"></div>
<div style="position:absolute;left:592px;top:1px;width:17px;height:17px;background:#222;border-bottom:1px solid #2c2c2c;box-sizing:border-box;"></div>
<div style="position:absolute;left:592px;top:19px;width:17px;height:105px;background:#232323;border-bottom:1px solid #2c2c2c;box-sizing:border-box;"></div>
<div style="position:absolute;left:592px;top:225px;width:17px;height:17px;background:#222;border-top:1px solid #2c2c2c;box-sizing:border-box;"></div>
<svg style="position:absolute;left:596px;top:5px" width="10" height="8"><path d="M1 6h8L5 1z" fill="#ddd"/></svg>
<svg style="position:absolute;left:596px;top:230px" width="10" height="8"><path d="M1 2h8L5 7z" fill="#ddd"/></svg>
<div style="position:absolute;left:0px;top:242px;width:610px;height:1px;background:#2e2e2e;"></div>
</div>
<div style="position:absolute;left:0px;top:1218px;width:614px;height:40px;overflow:hidden;background:#1b1b1b;">
<div style="position:absolute;left:-78px;top:5px;width:131px;height:34px;background:#29343e;border:1px solid #394550;border-bottom:none;border-radius:7px 7px 0 0;box-sizing:border-box;"></div>
<svg style="position:absolute;left:-69px;top:16px" width="16" height="17" viewBox="0 0 16 17"><rect x="3" y="0" width="3.4" height="2.6" fill="#9c7410"/><rect x="9.6" y="0" width="3.4" height="2.6" fill="#9c7410"/><path d="M2.2 3h4.6v3h2.4V3h4.6l2.2 9.5V16.5H9.6V12H6.4v4.5H0V12.5z" fill="#9c7410"/></svg>
<div class="t s" style="left:-46px;top:13px;"><span style="color:#e8a510">Threads</span></div>
<svg style="position:absolute;left:34px;top:20px" width="9" height="9" viewBox="0 0 9 9"><path d="M1.2 1.2L7.8 7.8M7.8 1.2L1.2 7.8" stroke="#a8800c" stroke-width="2.9" stroke-linecap="butt"/></svg>
<div style="position:absolute;left:57px;top:5px;width:235px;height:34px;background:#29343e;border:1px solid #394550;border-bottom:none;border-radius:7px 7px 0 0;box-sizing:border-box;"></div>
<svg style="position:absolute;left:66px;top:16px" width="16" height="13" viewBox="0 0 16 13"><rect x="0" y="0" width="16" height="13" fill="#9c7410"/><rect x="1.60" y="1.60" width="2.2" height="2.2" fill="#00000090"/><rect x="5.20" y="1.60" width="2.2" height="2.2" fill="#00000090"/><rect x="8.80" y="1.60" width="2.2" height="2.2" fill="#00000090"/><rect x="12.40" y="1.60" width="2.2" height="2.2" fill="#00000090"/><rect x="1.60" y="5.20" width="2.2" height="2.2" fill="#00000090"/><rect x="5.20" y="5.20" width="2.2" height="2.2" fill="#00000090"/><rect x="8.80" y="5.20" width="2.2" height="2.2" fill="#00000090"/><rect x="12.40" y="5.20" width="2.2" height="2.2" fill="#00000090"/><rect x="1.60" y="8.80" width="2.2" height="2.2" fill="#00000090"/><rect x="5.20" y="8.80" width="2.2" height="2.2" fill="#00000090"/><rect x="8.80" y="8.80" width="2.2" height="2.2" fill="#00000090"/><rect x="12.40" y="8.80" width="2.2" height="2.2" fill="#00000090"/></svg>
<div class="t s" style="left:89px;top:13px;"><span style="color:#e8a510">Memory</span></div>
<div class="t m" style="left:158px;top:13px;font-size:13.3px;letter-spacing:-0.2px;-webkit-text-stroke:0.15px;"><span style="color:#a07a10">(VArena)base</span></div>
<svg style="position:absolute;left:273px;top:20px" width="9" height="9" viewBox="0 0 9 9"><path d="M1.2 1.2L7.8 7.8M7.8 1.2L1.2 7.8" stroke="#a8800c" stroke-width="2.9" stroke-linecap="butt"/></svg>
<div style="position:absolute;left:296px;top:5px;width:134px;height:34px;background:#29343e;border:1px solid #394550;border-bottom:none;border-radius:7px 7px 0 0;box-sizing:border-box;"></div>
<svg style="position:absolute;left:305px;top:16px" width="16" height="16" viewBox="0 0 16 16"><rect x="0" y="0.5" width="16" height="3.8" fill="#9c7410"/><rect x="0.8" y="5.2" width="14.4" height="9.8" fill="#9c7410"/><rect x="6.2" y="6.6" width="3.6" height="1.1" fill="#00000060"/></svg>
<div class="t s" style="left:328px;top:13px;"><span style="color:#e8a510">Modules</span></div>
<svg style="position:absolute;left:411px;top:20px" width="9" height="9" viewBox="0 0 9 9"><path d="M1.2 1.2L7.8 7.8M7.8 1.2L1.2 7.8" stroke="#a8800c" stroke-width="2.9" stroke-linecap="butt"/></svg>
<div style="position:absolute;left:434px;top:5px;width:206px;height:34px;background:#6f5036;border:1px solid #8a6a4c;border-bottom:none;border-radius:7px 7px 0 0;box-sizing:border-box;"></div>
<svg style="position:absolute;left:443px;top:16px" width="16" height="13" viewBox="0 0 16 13"><rect x="0" y="0" width="16" height="13" fill="#9c7410"/><rect x="1.60" y="1.60" width="2.2" height="2.2" fill="#00000090"/><rect x="5.20" y="1.60" width="2.2" height="2.2" fill="#00000090"/><rect x="8.80" y="1.60" width="2.2" height="2.2" fill="#00000090"/><rect x="12.40" y="1.60" width="2.2" height="2.2" fill="#00000090"/><rect x="1.60" y="5.20" width="2.2" height="2.2" fill="#00000090"/><rect x="5.20" y="5.20" width="2.2" height="2.2" fill="#00000090"/><rect x="8.80" y="5.20" width="2.2" height="2.2" fill="#00000090"/><rect x="12.40" y="5.20" width="2.2" height="2.2" fill="#00000090"/><rect x="1.60" y="8.80" width="2.2" height="2.2" fill="#00000090"/><rect x="5.20" y="8.80" width="2.2" height="2.2" fill="#00000090"/><rect x="8.80" y="8.80" width="2.2" height="2.2" fill="#00000090"/><rect x="12.40" y="8.80" width="2.2" height="2.2" fill="#00000090"/></svg>
<div class="t s" style="left:466px;top:13px;"><span style="color:#e8a510">Memory</span></div>
<div class="t m" style="left:535px;top:13px;font-size:13.3px;letter-spacing:-0.2px;-webkit-text-stroke:0.15px;"><span style="color:#a07a10">pmem.signal</span></div>
<svg style="position:absolute;left:621px;top:20px" width="9" height="9" viewBox="0 0 9 9"><path d="M1.2 1.2L7.8 7.8M7.8 1.2L1.2 7.8" stroke="#a8800c" stroke-width="2.9" stroke-linecap="butt"/></svg>
</div>
<div style="position:absolute;left:609px;top:1222px;width:6px;height:36px;background:#1b1b1b;"></div>
<div style="position:absolute;left:0px;top:1258px;width:610px;height:76px;overflow:hidden;background:#161616;">
<div style="position:absolute;left:0px;top:0px;width:610px;height:1px;background:#2e2e2e;"></div>
<div style="position:absolute;left:0px;top:1px;width:124px;height:22px;background:radial-gradient(ellipse 60px 9px at 60px 11px,#2a2a2a,#1c1c1c);"></div>
<div style="position:absolute;left:116px;top:1px;width:8px;height:22px;background:#181818;"></div>
<div style="position:absolute;left:124px;top:1px;width:384px;height:22px;background:linear-gradient(180deg,#3a2320,#33201d);"></div>
<div style="position:absolute;left:508px;top:1px;width:83px;height:22px;background:linear-gradient(90deg,#2a1f1d,#1c1c1c 30%);"></div>
<div style="position:absolute;left:0px;top:23px;width:591px;height:2px;background:#3a3a3a;"></div>
<div style="position:absolute;left:124px;top:1px;width:24px;height:22px;line-height:22px;text-align:center;font-family:'Liberation Mono',monospace;font-size:17.5px;letter-spacing:-0.5px;-webkit-text-stroke:0.2px;color:#b4b0ae">0</div>
<div style="position:absolute;left:148px;top:1px;width:24px;height:22px;line-height:22px;text-align:center;font-family:'Liberation Mono',monospace;font-size:17.5px;letter-spacing:-0.5px;-webkit-text-stroke:0.2px;color:#b4b0ae">1</div>
<div style="position:absolute;left:172px;top:1px;width:24px;height:22px;line-height:22px;text-align:center;font-family:'Liberation Mono',monospace;font-size:17.5px;letter-spacing:-0.5px;-webkit-text-stroke:0.2px;color:#b4b0ae">2</div>
<div style="position:absolute;left:196px;top:1px;width:24px;height:22px;line-height:22px;text-align:center;font-family:'Liberation Mono',monospace;font-size:17.5px;letter-spacing:-0.5px;-webkit-text-stroke:0.2px;color:#b4b0ae">3</div>
<div style="position:absolute;left:220px;top:1px;width:24px;height:22px;line-height:22px;text-align:center;font-family:'Liberation Mono',monospace;font-size:17.5px;letter-spacing:-0.5px;-webkit-text-stroke:0.2px;color:#b4b0ae">4</div>
<div style="position:absolute;left:244px;top:1px;width:24px;height:22px;line-height:22px;text-align:center;font-family:'Liberation Mono',monospace;font-size:17.5px;letter-spacing:-0.5px;-webkit-text-stroke:0.2px;color:#b4b0ae">5</div>
<div style="position:absolute;left:268px;top:1px;width:24px;height:22px;line-height:22px;text-align:center;font-family:'Liberation Mono',monospace;font-size:17.5px;letter-spacing:-0.5px;-webkit-text-stroke:0.2px;color:#b4b0ae">6</div>
<div style="position:absolute;left:292px;top:1px;width:24px;height:22px;line-height:22px;text-align:center;font-family:'Liberation Mono',monospace;font-size:17.5px;letter-spacing:-0.5px;-webkit-text-stroke:0.2px;color:#b4b0ae">7</div>
<div style="position:absolute;left:316px;top:1px;width:24px;height:22px;line-height:22px;text-align:center;font-family:'Liberation Mono',monospace;font-size:17.5px;letter-spacing:-0.5px;-webkit-text-stroke:0.2px;color:#e0e0e0">8</div>
<div style="position:absolute;left:340px;top:1px;width:24px;height:22px;line-height:22px;text-align:center;font-family:'Liberation Mono',monospace;font-size:17.5px;letter-spacing:-0.5px;-webkit-text-stroke:0.2px;color:#b4b0ae">9</div>
<div style="position:absolute;left:364px;top:1px;width:24px;height:22px;line-height:22px;text-align:center;font-family:'Liberation Mono',monospace;font-size:17.5px;letter-spacing:-0.5px;-webkit-text-stroke:0.2px;color:#b4b0ae">A</div>
<div style="position:absolute;left:388px;top:1px;width:24px;height:22px;line-height:22px;text-align:center;font-family:'Liberation Mono',monospace;font-size:17.5px;letter-spacing:-0.5px;-webkit-text-stroke:0.2px;color:#b4b0ae">B</div>
<div style="position:absolute;left:412px;top:1px;width:24px;height:22px;line-height:22px;text-align:center;font-family:'Liberation Mono',monospace;font-size:17.5px;letter-spacing:-0.5px;-webkit-text-stroke:0.2px;color:#b4b0ae">C</div>
<div style="position:absolute;left:436px;top:1px;width:24px;height:22px;line-height:22px;text-align:center;font-family:'Liberation Mono',monospace;font-size:17.5px;letter-spacing:-0.5px;-webkit-text-stroke:0.2px;color:#b4b0ae">D</div>
<div style="position:absolute;left:460px;top:1px;width:24px;height:22px;line-height:22px;text-align:center;font-family:'Liberation Mono',monospace;font-size:17.5px;letter-spacing:-0.5px;-webkit-text-stroke:0.2px;color:#b4b0ae">E</div>
<div style="position:absolute;left:484px;top:1px;width:24px;height:22px;line-height:22px;text-align:center;font-family:'Liberation Mono',monospace;font-size:17.5px;letter-spacing:-0.5px;-webkit-text-stroke:0.2px;color:#b4b0ae">F</div>
<div class="t m" style="left:526px;top:0px;-webkit-text-stroke:0.5px;"><span style="color:#ececec">ASCII</span></div>
<div style="position:absolute;left:124px;top:25px;width:384px;height:24px;background:#6c2a21;"></div>
<div style="position:absolute;left:124px;top:25px;width:1px;height:24px;background:#5e241c;"></div>
<div style="position:absolute;left:148px;top:25px;width:1px;height:24px;background:#5e241c;"></div>
<div style="position:absolute;left:172px;top:25px;width:1px;height:24px;background:#5e241c;"></div>
<div style="position:absolute;left:196px;top:25px;width:1px;height:24px;background:#5e241c;"></div>
<div style="position:absolute;left:220px;top:25px;width:1px;height:24px;background:#5e241c;"></div>
<div style="position:absolute;left:244px;top:25px;width:1px;height:24px;background:#5e241c;"></div>
<div style="position:absolute;left:268px;top:25px;width:1px;height:24px;background:#5e241c;"></div>
<div style="position:absolute;left:292px;top:25px;width:1px;height:24px;background:#5e241c;"></div>
<div style="position:absolute;left:316px;top:25px;width:1px;height:24px;background:#5e241c;"></div>
<div style="position:absolute;left:340px;top:25px;width:1px;height:24px;background:#5e241c;"></div>
<div style="position:absolute;left:364px;top:25px;width:1px;height:24px;background:#5e241c;"></div>
<div style="position:absolute;left:388px;top:25px;width:1px;height:24px;background:#5e241c;"></div>
<div style="position:absolute;left:412px;top:25px;width:1px;height:24px;background:#5e241c;"></div>
<div style="position:absolute;left:436px;top:25px;width:1px;height:24px;background:#5e241c;"></div>
<div style="position:absolute;left:460px;top:25px;width:1px;height:24px;background:#5e241c;"></div>
<div style="position:absolute;left:484px;top:25px;width:1px;height:24px;background:#5e241c;"></div>
<div style="position:absolute;left:124px;top:48px;width:384px;height:1px;background:#5e241c;"></div>
<div style="position:absolute;left:124px;top:25px;width:24px;height:24px;line-height:24px;text-align:center;font-family:'Liberation Mono',monospace;font-size:17.5px;letter-spacing:-0.5px;-webkit-text-stroke:0px;color:#a08a84">00</div>
<div style="position:absolute;left:148px;top:25px;width:24px;height:24px;line-height:24px;text-align:center;font-family:'Liberation Mono',monospace;font-size:17.5px;letter-spacing:-0.5px;-webkit-text-stroke:0px;color:#a08a84">00</div>
<div style="position:absolute;left:172px;top:25px;width:24px;height:24px;line-height:24px;text-align:center;font-family:'Liberation Mono',monospace;font-size:17.5px;letter-spacing:-0.5px;-webkit-text-stroke:0px;color:#a08a84">00</div>
<div style="position:absolute;left:196px;top:25px;width:24px;height:24px;line-height:24px;text-align:center;font-family:'Liberation Mono',monospace;font-size:17.5px;letter-spacing:-0.5px;-webkit-text-stroke:0px;color:#a08a84">00</div>
<div style="position:absolute;left:220px;top:25px;width:24px;height:24px;line-height:24px;text-align:center;font-family:'Liberation Mono',monospace;font-size:17.5px;letter-spacing:-0.5px;-webkit-text-stroke:0px;color:#a08a84">00</div>
<div style="position:absolute;left:244px;top:25px;width:24px;height:24px;line-height:24px;text-align:center;font-family:'Liberation Mono',monospace;font-size:17.5px;letter-spacing:-0.5px;-webkit-text-stroke:0px;color:#a08a84">00</div>
<div style="position:absolute;left:268px;top:25px;width:24px;height:24px;line-height:24px;text-align:center;font-family:'Liberation Mono',monospace;font-size:17.5px;letter-spacing:-0.5px;-webkit-text-stroke:0px;color:#a08a84">00</div>
<div style="position:absolute;left:292px;top:25px;width:24px;height:24px;line-height:24px;text-align:center;font-family:'Liberation Mono',monospace;font-size:17.5px;letter-spacing:-0.5px;-webkit-text-stroke:0px;color:#a08a84">00</div>
<div style="position:absolute;left:316px;top:25px;width:24px;height:24px;line-height:24px;text-align:center;font-family:'Liberation Mono',monospace;font-size:17.5px;letter-spacing:-0.5px;-webkit-text-stroke:0px;color:#a08a84">00</div>
<div style="position:absolute;left:340px;top:25px;width:24px;height:24px;line-height:24px;text-align:center;font-family:'Liberation Mono',monospace;font-size:17.5px;letter-spacing:-0.5px;-webkit-text-stroke:0px;color:#a08a84">00</div>
<div style="position:absolute;left:364px;top:25px;width:24px;height:24px;line-height:24px;text-align:center;font-family:'Liberation Mono',monospace;font-size:17.5px;letter-spacing:-0.5px;-webkit-text-stroke:0px;color:#a08a84">00</div>
<div style="position:absolute;left:388px;top:25px;width:24px;height:24px;line-height:24px;text-align:center;font-family:'Liberation Mono',monospace;font-size:17.5px;letter-spacing:-0.5px;-webkit-text-stroke:0px;color:#a08a84">00</div>
<div style="position:absolute;left:412px;top:25px;width:24px;height:24px;line-height:24px;text-align:center;font-family:'Liberation Mono',monospace;font-size:17.5px;letter-spacing:-0.5px;-webkit-text-stroke:0px;color:#a08a84">00</div>
<div style="position:absolute;left:436px;top:25px;width:24px;height:24px;line-height:24px;text-align:center;font-family:'Liberation Mono',monospace;font-size:17.5px;letter-spacing:-0.5px;-webkit-text-stroke:0px;color:#a08a84">00</div>
<div style="position:absolute;left:460px;top:25px;width:24px;height:24px;line-height:24px;text-align:center;font-family:'Liberation Mono',monospace;font-size:17.5px;letter-spacing:-0.5px;-webkit-text-stroke:0px;color:#a08a84">00</div>
<div style="position:absolute;left:484px;top:25px;width:24px;height:24px;line-height:24px;text-align:center;font-family:'Liberation Mono',monospace;font-size:17.5px;letter-spacing:-0.5px;-webkit-text-stroke:0px;color:#a08a84">00</div>
<div class="t m" style="left:-5.5px;top:24.5px;"><span style="color:#e6e6e6">ff7e42bc810</span></div>
<div class="t m" style="left:527px;top:25px;letter-spacing:-1.4px;"><span style="color:#d0d0d0">......</span></div>
<div style="position:absolute;left:124px;top:49px;width:384px;height:24px;background:#6c2a21;"></div>
<div style="position:absolute;left:124px;top:49px;width:1px;height:24px;background:#5e241c;"></div>
<div style="position:absolute;left:148px;top:49px;width:1px;height:24px;background:#5e241c;"></div>
<div style="position:absolute;left:172px;top:49px;width:1px;height:24px;background:#5e241c;"></div>
<div style="position:absolute;left:196px;top:49px;width:1px;height:24px;background:#5e241c;"></div>
<div style="position:absolute;left:220px;top:49px;width:1px;height:24px;background:#5e241c;"></div>
<div style="position:absolute;left:244px;top:49px;width:1px;height:24px;background:#5e241c;"></div>
<div style="position:absolute;left:268px;top:49px;width:1px;height:24px;background:#5e241c;"></div>
<div style="position:absolute;left:292px;top:49px;width:1px;height:24px;background:#5e241c;"></div>
<div style="position:absolute;left:316px;top:49px;width:1px;height:24px;background:#5e241c;"></div>
<div style="position:absolute;left:340px;top:49px;width:1px;height:24px;background:#5e241c;"></div>
<div style="position:absolute;left:364px;top:49px;width:1px;height:24px;background:#5e241c;"></div>
<div style="position:absolute;left:388px;top:49px;width:1px;height:24px;background:#5e241c;"></div>
<div style="position:absolute;left:412px;top:49px;width:1px;height:24px;background:#5e241c;"></div>
<div style="position:absolute;left:436px;top:49px;width:1px;height:24px;background:#5e241c;"></div>
<div style="position:absolute;left:460px;top:49px;width:1px;height:24px;background:#5e241c;"></div>
<div style="position:absolute;left:484px;top:49px;width:1px;height:24px;background:#5e241c;"></div>
<div style="position:absolute;left:124px;top:72px;width:384px;height:1px;background:#5e241c;"></div>
<div style="position:absolute;left:124px;top:49px;width:24px;height:24px;line-height:24px;text-align:center;font-family:'Liberation Mono',monospace;font-size:17.5px;letter-spacing:-0.5px;-webkit-text-stroke:0px;color:#a08a84">00</div>
<div style="position:absolute;left:148px;top:49px;width:24px;height:24px;line-height:24px;text-align:center;font-family:'Liberation Mono',monospace;font-size:17.5px;letter-spacing:-0.5px;-webkit-text-stroke:0px;color:#a08a84">00</div>
<div style="position:absolute;left:172px;top:49px;width:24px;height:24px;line-height:24px;text-align:center;font-family:'Liberation Mono',monospace;font-size:17.5px;letter-spacing:-0.5px;-webkit-text-stroke:0px;color:#a08a84">00</div>
<div style="position:absolute;left:196px;top:49px;width:24px;height:24px;line-height:24px;text-align:center;font-family:'Liberation Mono',monospace;font-size:17.5px;letter-spacing:-0.5px;-webkit-text-stroke:0px;color:#a08a84">00</div>
<div style="position:absolute;left:220px;top:49px;width:24px;height:24px;line-height:24px;text-align:center;font-family:'Liberation Mono',monospace;font-size:17.5px;letter-spacing:-0.5px;-webkit-text-stroke:0px;color:#a08a84">00</div>
<div style="position:absolute;left:244px;top:49px;width:24px;height:24px;line-height:24px;text-align:center;font-family:'Liberation Mono',monospace;font-size:17.5px;letter-spacing:-0.5px;-webkit-text-stroke:0px;color:#a08a84">00</div>
<div style="position:absolute;left:268px;top:49px;width:24px;height:24px;line-height:24px;text-align:center;font-family:'Liberation Mono',monospace;font-size:17.5px;letter-spacing:-0.5px;-webkit-text-stroke:0px;color:#a08a84">00</div>
<div style="position:absolute;left:292px;top:49px;width:24px;height:24px;line-height:24px;text-align:center;font-family:'Liberation Mono',monospace;font-size:17.5px;letter-spacing:-0.5px;-webkit-text-stroke:0px;color:#a08a84">00</div>
<div style="position:absolute;left:316px;top:49px;width:24px;height:24px;line-height:24px;text-align:center;font-family:'Liberation Mono',monospace;font-size:17.5px;letter-spacing:-0.5px;-webkit-text-stroke:0px;color:#a08a84">00</div>
<div style="position:absolute;left:340px;top:49px;width:24px;height:24px;line-height:24px;text-align:center;font-family:'Liberation Mono',monospace;font-size:17.5px;letter-spacing:-0.5px;-webkit-text-stroke:0px;color:#a08a84">00</div>
<div style="position:absolute;left:364px;top:49px;width:24px;height:24px;line-height:24px;text-align:center;font-family:'Liberation Mono',monospace;font-size:17.5px;letter-spacing:-0.5px;-webkit-text-stroke:0px;color:#a08a84">00</div>
<div style="position:absolute;left:388px;top:49px;width:24px;height:24px;line-height:24px;text-align:center;font-family:'Liberation Mono',monospace;font-size:17.5px;letter-spacing:-0.5px;-webkit-text-stroke:0px;color:#a08a84">00</div>
<div style="position:absolute;left:412px;top:49px;width:24px;height:24px;line-height:24px;text-align:center;font-family:'Liberation Mono',monospace;font-size:17.5px;letter-spacing:-0.5px;-webkit-text-stroke:0px;color:#a08a84">00</div>
<div style="position:absolute;left:436px;top:49px;width:24px;height:24px;line-height:24px;text-align:center;font-family:'Liberation Mono',monospace;font-size:17.5px;letter-spacing:-0.5px;-webkit-text-stroke:0px;color:#a08a84">00</div>
<div style="position:absolute;left:460px;top:49px;width:24px;height:24px;line-height:24px;text-align:center;font-family:'Liberation Mono',monospace;font-size:17.5px;letter-spacing:-0.5px;-webkit-text-stroke:0px;color:#a08a84">00</div>
<div style="position:absolute;left:484px;top:49px;width:24px;height:24px;line-height:24px;text-align:center;font-family:'Liberation Mono',monospace;font-size:17.5px;letter-spacing:-0.5px;-webkit-text-stroke:0px;color:#a08a84">00</div>
<div class="t m" style="left:-5.5px;top:48.5px;"><span style="color:#c4c4c4">ff7e42bc820</span></div>
<div class="t m" style="left:527px;top:49px;letter-spacing:-1.4px;"><span style="color:#d0d0d0">......</span></div>
<div style="position:absolute;left:124px;top:73px;width:384px;height:24px;background:#6c2a21;"></div>
<div style="position:absolute;left:124px;top:73px;width:1px;height:24px;background:#5e241c;"></div>
<div style="position:absolute;left:148px;top:73px;width:1px;height:24px;background:#5e241c;"></div>
<div style="position:absolute;left:172px;top:73px;width:1px;height:24px;background:#5e241c;"></div>
<div style="position:absolute;left:196px;top:73px;width:1px;height:24px;background:#5e241c;"></div>
<div style="position:absolute;left:220px;top:73px;width:1px;height:24px;background:#5e241c;"></div>
<div style="position:absolute;left:244px;top:73px;width:1px;height:24px;background:#5e241c;"></div>
<div style="position:absolute;left:268px;top:73px;width:1px;height:24px;background:#5e241c;"></div>
<div style="position:absolute;left:292px;top:73px;width:1px;height:24px;background:#5e241c;"></div>
<div style="position:absolute;left:316px;top:73px;width:1px;height:24px;background:#5e241c;"></div>
<div style="position:absolute;left:340px;top:73px;width:1px;height:24px;background:#5e241c;"></div>
<div style="position:absolute;left:364px;top:73px;width:1px;height:24px;background:#5e241c;"></div>
<div style="position:absolute;left:388px;top:73px;width:1px;height:24px;background:#5e241c;"></div>
<div style="position:absolute;left:412px;top:73px;width:1px;height:24px;background:#5e241c;"></div>
<div style="position:absolute;left:436px;top:73px;width:1px;height:24px;background:#5e241c;"></div>
<div style="position:absolute;left:460px;top:73px;width:1px;height:24px;background:#5e241c;"></div>
<div style="position:absolute;left:484px;top:73px;width:1px;height:24px;background:#5e241c;"></div>
<div style="position:absolute;left:124px;top:96px;width:384px;height:1px;background:#5e241c;"></div>
<div style="position:absolute;left:124px;top:73px;width:24px;height:24px;line-height:24px;text-align:center;font-family:'Liberation Mono',monospace;font-size:17.5px;letter-spacing:-0.5px;-webkit-text-stroke:0px;color:#a08a84">00</div>
<div style="position:absolute;left:148px;top:73px;width:24px;height:24px;line-height:24px;text-align:center;font-family:'Liberation Mono',monospace;font-size:17.5px;letter-spacing:-0.5px;-webkit-text-stroke:0px;color:#a08a84">00</div>
<div style="position:absolute;left:172px;top:73px;width:24px;height:24px;line-height:24px;text-align:center;font-family:'Liberation Mono',monospace;font-size:17.5px;letter-spacing:-0.5px;-webkit-text-stroke:0px;color:#a08a84">00</div>
<div style="position:absolute;left:196px;top:73px;width:24px;height:24px;line-height:24px;text-align:center;font-family:'Liberation Mono',monospace;font-size:17.5px;letter-spacing:-0.5px;-webkit-text-stroke:0px;color:#a08a84">00</div>
<div style="position:absolute;left:220px;top:73px;width:24px;height:24px;line-height:24px;text-align:center;font-family:'Liberation Mono',monospace;font-size:17.5px;letter-spacing:-0.5px;-webkit-text-stroke:0px;color:#a08a84">00</div>
<div style="position:absolute;left:244px;top:73px;width:24px;height:24px;line-height:24px;text-align:center;font-family:'Liberation Mono',monospace;font-size:17.5px;letter-spacing:-0.5px;-webkit-text-stroke:0px;color:#a08a84">00</div>
<div style="position:absolute;left:268px;top:73px;width:24px;height:24px;line-height:24px;text-align:center;font-family:'Liberation Mono',monospace;font-size:17.5px;letter-spacing:-0.5px;-webkit-text-stroke:0px;color:#a08a84">00</div>
<div style="position:absolute;left:292px;top:73px;width:24px;height:24px;line-height:24px;text-align:center;font-family:'Liberation Mono',monospace;font-size:17.5px;letter-spacing:-0.5px;-webkit-text-stroke:0px;color:#a08a84">00</div>
<div style="position:absolute;left:316px;top:73px;width:24px;height:24px;line-height:24px;text-align:center;font-family:'Liberation Mono',monospace;font-size:17.5px;letter-spacing:-0.5px;-webkit-text-stroke:0px;color:#a08a84">00</div>
<div style="position:absolute;left:340px;top:73px;width:24px;height:24px;line-height:24px;text-align:center;font-family:'Liberation Mono',monospace;font-size:17.5px;letter-spacing:-0.5px;-webkit-text-stroke:0px;color:#a08a84">00</div>
<div style="position:absolute;left:364px;top:73px;width:24px;height:24px;line-height:24px;text-align:center;font-family:'Liberation Mono',monospace;font-size:17.5px;letter-spacing:-0.5px;-webkit-text-stroke:0px;color:#a08a84">00</div>
<div style="position:absolute;left:388px;top:73px;width:24px;height:24px;line-height:24px;text-align:center;font-family:'Liberation Mono',monospace;font-size:17.5px;letter-spacing:-0.5px;-webkit-text-stroke:0px;color:#a08a84">00</div>
<div style="position:absolute;left:412px;top:73px;width:24px;height:24px;line-height:24px;text-align:center;font-family:'Liberation Mono',monospace;font-size:17.5px;letter-spacing:-0.5px;-webkit-text-stroke:0px;color:#a08a84">00</div>
<div style="position:absolute;left:436px;top:73px;width:24px;height:24px;line-height:24px;text-align:center;font-family:'Liberation Mono',monospace;font-size:17.5px;letter-spacing:-0.5px;-webkit-text-stroke:0px;color:#a08a84">00</div>
<div style="position:absolute;left:460px;top:73px;width:24px;height:24px;line-height:24px;text-align:center;font-family:'Liberation Mono',monospace;font-size:17.5px;letter-spacing:-0.5px;-webkit-text-stroke:0px;color:#a08a84">00</div>
<div style="position:absolute;left:484px;top:73px;width:24px;height:24px;line-height:24px;text-align:center;font-family:'Liberation Mono',monospace;font-size:17.5px;letter-spacing:-0.5px;-webkit-text-stroke:0px;color:#a08a84">00</div>
<div class="t m" style="left:-5.5px;top:72.5px;"><span style="color:#c4c4c4">ff7e42bc830</span></div>
<div class="t m" style="left:527px;top:73px;letter-spacing:-1.4px;"><span style="color:#d0d0d0">......</span></div>
<div style="position:absolute;left:316px;top:25px;width:24px;height:24px;background:transparent;border:2px solid #e8e8e8;box-sizing:border-box;"></div>
<div style="position:absolute;left:591px;top:0px;width:19px;height:76px;background:#161616;border-left:1px solid #2a2a2a;border-right:1px solid #2a2a2a;box-sizing:border-box;"></div>
<div style="position:absolute;left:592px;top:1px;width:17px;height:17px;background:#222;border-bottom:1px solid #2c2c2c;box-sizing:border-box;"></div>
<svg style="position:absolute;left:596px;top:5px" width="10" height="8"><path d="M1 6h8L5 1z" fill="#ddd"/></svg>
</div>
<div style="position:absolute;left:614px;top:975px;width:1px;height:359px;background:#2a2a2a;"></div>
<div style="position:absolute;left:615px;top:935px;width:743px;height:40px;overflow:hidden;">
<div style="position:absolute;left:5px;top:5px;width:124px;height:34px;background:#29343e;border:1px solid #394550;border-bottom:none;border-radius:7px 7px 0 0;box-sizing:border-box;"></div>
<svg style="position:absolute;left:14px;top:16px" width="16" height="16" viewBox="0 0 16 16"><circle cx="8" cy="8" r="6.3" fill="none" stroke="#9c7410" stroke-width="2.4" stroke-dasharray="8.3 1.6" stroke-dashoffset="-0.8" transform="rotate(-90 8 8)"/><circle cx="8" cy="8" r="3.6" fill="#9c7410"/><rect x="7.4" y="3" width="1.2" height="10" fill="#29343e"/><rect x="3" y="7.4" width="10" height="1.2" fill="#29343e"/></svg>
<div class="t s" style="left:37px;top:13px;"><span style="color:#e8a510">Targets</span></div>
<svg style="position:absolute;left:110px;top:20px" width="9" height="9" viewBox="0 0 9 9"><path d="M1.2 1.2L7.8 7.8M7.8 1.2L1.2 7.8" stroke="#a8800c" stroke-width="2.9" stroke-linecap="butt"/></svg>
<div style="position:absolute;left:133px;top:5px;width:133px;height:34px;background:#29343e;border:1px solid #394550;border-bottom:none;border-radius:7px 7px 0 0;box-sizing:border-box;"></div>
<svg style="position:absolute;left:142px;top:16px" width="16" height="16" viewBox="0 0 16 16"><rect x="0" y="0.5" width="16" height="3.8" fill="#9c7410"/><rect x="0.8" y="5.2" width="14.4" height="9.8" fill="#9c7410"/><rect x="6.2" y="6.6" width="3.6" height="1.1" fill="#00000060"/></svg>
<div class="t s" style="left:165px;top:13px;"><span style="color:#e8a510">Modules</span></div>
<svg style="position:absolute;left:247px;top:20px" width="9" height="9" viewBox="0 0 9 9"><path d="M1.2 1.2L7.8 7.8M7.8 1.2L1.2 7.8" stroke="#a8800c" stroke-width="2.9" stroke-linecap="butt"/></svg>
<div style="position:absolute;left:271px;top:5px;width:118px;height:34px;background:#6f5036;border:1px solid #8a6a4c;border-bottom:none;border-radius:7px 7px 0 0;box-sizing:border-box;"></div>
<svg style="position:absolute;left:280px;top:16px" width="16" height="17" viewBox="0 0 16 17"><rect x="3" y="0" width="3.4" height="2.6" fill="#9c7410"/><rect x="9.6" y="0" width="3.4" height="2.6" fill="#9c7410"/><path d="M2.2 3h4.6v3h2.4V3h4.6l2.2 9.5V16.5H9.6V12H6.4v4.5H0V12.5z" fill="#9c7410"/></svg>
<div class="t s" style="left:303px;top:13px;"><span style="color:#e8a510">Watch</span></div>
<svg style="position:absolute;left:370px;top:20px" width="9" height="9" viewBox="0 0 9 9"><path d="M1.2 1.2L7.8 7.8M7.8 1.2L1.2 7.8" stroke="#a8800c" stroke-width="2.9" stroke-linecap="butt"/></svg>
<div style="position:absolute;left:393px;top:5px;width:114px;height:34px;background:#29343e;border:1px solid #394550;border-bottom:none;border-radius:7px 7px 0 0;box-sizing:border-box;"></div>
<svg style="position:absolute;left:402px;top:16px" width="16" height="17" viewBox="0 0 16 17"><rect x="3" y="0" width="3.4" height="2.6" fill="#9c7410"/><rect x="9.6" y="0" width="3.4" height="2.6" fill="#9c7410"/><path d="M2.2 3h4.6v3h2.4V3h4.6l2.2 9.5V16.5H9.6V12H6.4v4.5H0V12.5z" fill="#9c7410"/></svg>
<div class="t s" style="left:425px;top:13px;"><span style="color:#e8a510">Types</span></div>
<svg style="position:absolute;left:488px;top:20px" width="9" height="9" viewBox="0 0 9 9"><path d="M1.2 1.2L7.8 7.8M7.8 1.2L1.2 7.8" stroke="#a8800c" stroke-width="2.9" stroke-linecap="butt"/></svg>
<svg style="position:absolute;left:525px;top:20px" width="10" height="10" viewBox="0 0 10 10"><path d="M5 0.5v9M0.5 5h9" stroke="#c4c4c4" stroke-width="1.9"/></svg>
</div>
<div style="position:absolute;left:615px;top:975px;width:743px;height:359px;overflow:hidden;background:#161616;">
<div style="position:absolute;left:0px;top:0px;width:743px;height:1px;background:#2e2e2e;"></div>
<div style="position:absolute;left:0px;top:1px;width:722px;height:34px;background:#141414;"></div>
<div style="position:absolute;left:0px;top:35px;width:722px;height:2px;background:#2e2e2e;"></div>
<div class="t s" style="left:8px;top:8px;"><span style="color:#c8c8c8">Expression</span></div>
<div style="position:absolute;left:722px;top:0px;width:19px;height:359px;background:#161616;border-left:1px solid #2a2a2a;border-right:1px solid #2a2a2a;box-sizing:border-box;"></div>
<div style="position:absolute;left:723px;top:1px;width:17px;height:18px;background:#1e1e1e;border-bottom:2px solid #2c2c2c;box-sizing:border-box;"></div>
<div style="position:absolute;left:723px;top:19px;width:17px;height:340px;background:#212121;"></div>
<svg style="position:absolute;left:727px;top:6px" width="10" height="8"><path d="M1 6h8L5 1z" fill="#ddd"/></svg>
</div>
<div style="position:absolute;left:1358px;top:935px;width:914px;height:40px;overflow:hidden;">
<div style="position:absolute;left:7px;top:5px;width:169px;height:34px;background:#29343e;border:1px solid #394550;border-bottom:none;border-radius:7px 7px 0 0;box-sizing:border-box;"></div>
<svg style="position:absolute;left:16px;top:16px" width="16" height="17" viewBox="0 0 16 17"><rect x="3" y="0" width="3.4" height="2.6" fill="#9c7410"/><rect x="9.6" y="0" width="3.4" height="2.6" fill="#9c7410"/><path d="M2.2 3h4.6v3h2.4V3h4.6l2.2 9.5V16.5H9.6V12H6.4v4.5H0V12.5z" fill="#9c7410"/></svg>
<div class="t s" style="left:39px;top:13px;"><span style="color:#e8a510">Thread Locals</span></div>
<svg style="position:absolute;left:157px;top:20px" width="9" height="9" viewBox="0 0 9 9"><path d="M1.2 1.2L7.8 7.8M7.8 1.2L1.2 7.8" stroke="#a8800c" stroke-width="2.9" stroke-linecap="butt"/></svg>
<div style="position:absolute;left:180px;top:5px;width:117px;height:34px;background:#6f5036;border:1px solid #8a6a4c;border-bottom:none;border-radius:7px 7px 0 0;box-sizing:border-box;"></div>
<svg style="position:absolute;left:189px;top:16px" width="16" height="17" viewBox="0 0 16 17"><rect x="3" y="0" width="3.4" height="2.6" fill="#9c7410"/><rect x="9.6" y="0" width="3.4" height="2.6" fill="#9c7410"/><path d="M2.2 3h4.6v3h2.4V3h4.6l2.2 9.5V16.5H9.6V12H6.4v4.5H0V12.5z" fill="#9c7410"/></svg>
<div class="t s" style="left:212px;top:13px;"><span style="color:#e8a510">Locals</span></div>
<svg style="position:absolute;left:278px;top:20px" width="9" height="9" viewBox="0 0 9 9"><path d="M1.2 1.2L7.8 7.8M7.8 1.2L1.2 7.8" stroke="#a8800c" stroke-width="2.9" stroke-linecap="butt"/></svg>
<div style="position:absolute;left:301px;top:5px;width:118px;height:34px;background:#29343e;border:1px solid #394550;border-bottom:none;border-radius:7px 7px 0 0;box-sizing:border-box;"></div>
<svg style="position:absolute;left:310px;top:16px" width="16" height="17" viewBox="0 0 16 17"><rect x="3" y="0" width="3.4" height="2.6" fill="#9c7410"/><rect x="9.6" y="0" width="3.4" height="2.6" fill="#9c7410"/><path d="M2.2 3h4.6v3h2.4V3h4.6l2.2 9.5V16.5H9.6V12H6.4v4.5H0V12.5z" fill="#9c7410"/></svg>
<div class="t s" style="left:333px;top:13px;"><span style="color:#e8a510">Watch</span></div>
<svg style="position:absolute;left:400px;top:20px" width="9" height="9" viewBox="0 0 9 9"><path d="M1.2 1.2L7.8 7.8M7.8 1.2L1.2 7.8" stroke="#a8800c" stroke-width="2.9" stroke-linecap="butt"/></svg>
<svg style="position:absolute;left:437px;top:20px" width="10" height="10" viewBox="0 0 10 10"><path d="M5 0.5v9M0.5 5h9" stroke="#c4c4c4" stroke-width="1.9"/></svg>
</div>
<div style="position:absolute;left:1358px;top:974px;width:914px;height:360px;overflow:hidden;background:#1b1b1b;">
<div style="position:absolute;left:2px;top:1px;width:176px;height:36px;background:#4d331b;"></div>
<div style="position:absolute;left:180px;top:1px;width:734px;height:36px;background:#2e363a;"></div>
<div style="position:absolute;left:178px;top:1px;width:2px;height:36px;background:#3a3a3a;"></div>
<div style="position:absolute;left:180px;top:36px;width:734px;height:1px;background:#353d42;"></div>
<div class="t m" style="left:10px;top:8px;-webkit-text-stroke:0.35px;"><span style="color:#a6c284">hwnd</span></div>
<div class="t m" style="left:187px;top:8px;"><span style="color:#a9b9c1">0xd4</span><span style="color:#74858d">1530</span></div>
<div style="position:absolute;left:2px;top:37px;width:176px;height:36px;background:#1f1f1f;"></div>
<div style="position:absolute;left:180px;top:37px;width:734px;height:36px;background:#2e363a;"></div>
<div style="position:absolute;left:178px;top:37px;width:2px;height:36px;background:#2a2a2a;"></div>
<div style="position:absolute;left:180px;top:72px;width:734px;height:1px;background:#353d42;"></div>
<div class="t m" style="left:10px;top:44px;-webkit-text-stroke:0.35px;"><span style="color:#a6c284">msg</span></div>
<div class="t m" style="left:187px;top:44px;"><span style="color:#a9b9c1">256</span></div>
<div style="position:absolute;left:2px;top:73px;width:176px;height:36px;background:#1b1b1b;"></div>
<div style="position:absolute;left:180px;top:73px;width:734px;height:36px;background:#2e363a;"></div>
<div style="position:absolute;left:178px;top:73px;width:2px;height:36px;background:#2a2a2a;"></div>
<div style="position:absolute;left:180px;top:108px;width:734px;height:1px;background:#353d42;"></div>
<div class="t m" style="left:10px;top:80px;-webkit-text-stroke:0.35px;"><span style="color:#a6c284">wparam</span></div>
<div class="t m" style="left:187px;top:80px;"><span style="color:#a9b9c1">39</span></div>
<div class="t m" style="left:886px;top:80px;font-size:13.3px;letter-spacing:-0.2px;-webkit-text-stroke:0.15px;"><span style="color:#c49a58">unsi</span></div>
<div style="position:absolute;left:2px;top:109px;width:176px;height:36px;background:#1f1f1f;"></div>
<div style="position:absolute;left:180px;top:109px;width:734px;height:36px;background:#2e363a;"></div>
<div style="position:absolute;left:178px;top:109px;width:2px;height:36px;background:#2a2a2a;"></div>
<div style="position:absolute;left:180px;top:144px;width:734px;height:1px;background:#353d42;"></div>
<div class="t m" style="left:10px;top:116px;-webkit-text-stroke:0.35px;"><span style="color:#a6c284">lparam</span></div>
<div class="t m" style="left:187px;top:116px;"><span style="color:#a9b9c1">21</span><span style="color:#74858d">823</span><span style="color:#a9b9c1">489</span></div>
<div style="position:absolute;left:2px;top:145px;width:176px;height:36px;background:#1b1b1b;"></div>
<div style="position:absolute;left:180px;top:145px;width:734px;height:36px;background:#2e363a;"></div>
<div style="position:absolute;left:178px;top:145px;width:2px;height:36px;background:#2a2a2a;"></div>
<div style="position:absolute;left:180px;top:180px;width:734px;height:1px;background:#353d42;"></div>
<div class="t m" style="left:10px;top:152px;-webkit-text-stroke:0.35px;"><span style="color:#a6c284">tape_count</span></div>
<div class="t m" style="left:187px;top:152px;"><span style="color:#a9b9c1">52</span></div>
<div class="t m" style="left:886px;top:152px;font-size:13.3px;letter-spacing:-0.2px;-webkit-text-stroke:0.15px;"><span style="color:#c49a58">unsi</span></div>
<div style="position:absolute;left:2px;top:181px;width:176px;height:36px;background:#1f1f1f;"></div>
<div style="position:absolute;left:180px;top:181px;width:734px;height:36px;background:#2e363a;"></div>
<div style="position:absolute;left:178px;top:181px;width:2px;height:36px;background:#2a2a2a;"></div>
<div style="position:absolute;left:180px;top:216px;width:734px;height:1px;background:#353d42;"></div>
<div class="t m" style="left:10px;top:188px;-webkit-text-stroke:0.35px;"><span style="color:#a6c284">tape_ptr</span></div>
<div class="t m" style="left:187px;top:188px;"><span style="color:#a9b9c1">0x215</span><span style="color:#74858d">f790</span><span style="color:#a9b9c1">0000</span><span style="color:#7a7a7a"> -&gt; </span><span style="color:#a9b9c1">0</span></div>
<div class="t m" style="left:901px;top:188px;font-size:13.3px;letter-spacing:-0.2px;-webkit-text-stroke:0.15px;"><span style="color:#e8b838">ui</span></div>
<div style="position:absolute;left:2px;top:217px;width:176px;height:36px;background:#1b1b1b;"></div>
<div style="position:absolute;left:180px;top:217px;width:734px;height:36px;background:#1c1c1c;"></div>
<div style="position:absolute;left:178px;top:217px;width:2px;height:36px;background:#2a2a2a;"></div>
<div style="position:absolute;left:180px;top:252px;width:734px;height:1px;background:#353d42;"></div>
<div class="t m" style="left:10px;top:224px;-webkit-text-stroke:0.35px;"><span style="color:#a6c284">i</span></div>
<svg style="position:absolute;left:192px;top:228px" width="17" height="16" viewBox="0 0 17 16"><path d="M8.5 0.5L16.5 15.5H0.5Z" fill="#c8c8c8"/><rect x="7.6" y="5" width="1.8" height="5.5" fill="#1c1c1c"/><rect x="7.6" y="11.8" width="1.8" height="1.8" fill="#1c1c1c"/></svg>
<div class="t s" style="left:216px;top:225px;"><span style="color:#d4d4d4">Could not find location info for </span><span style="font-family:'Liberation Mono';font-weight:bold;color:#f0f0f0">i</span><span style="color:#d4d4d4">.</span></div>
<div style="position:absolute;left:2px;top:253px;width:176px;height:36px;background:#1f1f1f;"></div>
<div style="position:absolute;left:180px;top:253px;width:734px;height:36px;background:#2e363a;"></div>
<div style="position:absolute;left:178px;top:253px;width:2px;height:36px;background:#2a2a2a;"></div>
<div style="position:absolute;left:180px;top:288px;width:734px;height:1px;background:#353d42;"></div>
<div class="t m" style="left:10px;top:260px;-webkit-text-stroke:0.35px;"><span style="color:#a6c284">func</span></div>
<div class="t m" style="left:187px;top:260px;"><span style="color:#7a7a7a">??? </span><span style="color:#7a7a7a">(</span><span style="color:#a9b9c1">0x215</span><span style="color:#74858d">f791</span><span style="color:#a9b9c1">0000</span><span style="color:#7a7a7a">)</span></div>
<div class="t m" style="left:790px;top:260px;font-size:13.3px;letter-spacing:-0.2px;-webkit-text-stroke:0.15px;"><span style="color:#c49a58">void </span><span style="color:#9a9a9a">(*)(</span><span style="color:#c49a58">unsigne</span></div>
<div style="position:absolute;left:2px;top:288px;width:912px;height:2px;background:#404448;"></div>
<div style="position:absolute;left:0px;top:0px;width:914px;height:2px;background:#dc8a1c;"></div>
<div style="position:absolute;left:0px;top:0px;width:2px;height:360px;background:#dc8a1c;"></div>
</div>
<div style="position:absolute;left:1355px;top:975px;width:3px;height:359px;background:#1b1b1b;"></div>
</div></body></html>
